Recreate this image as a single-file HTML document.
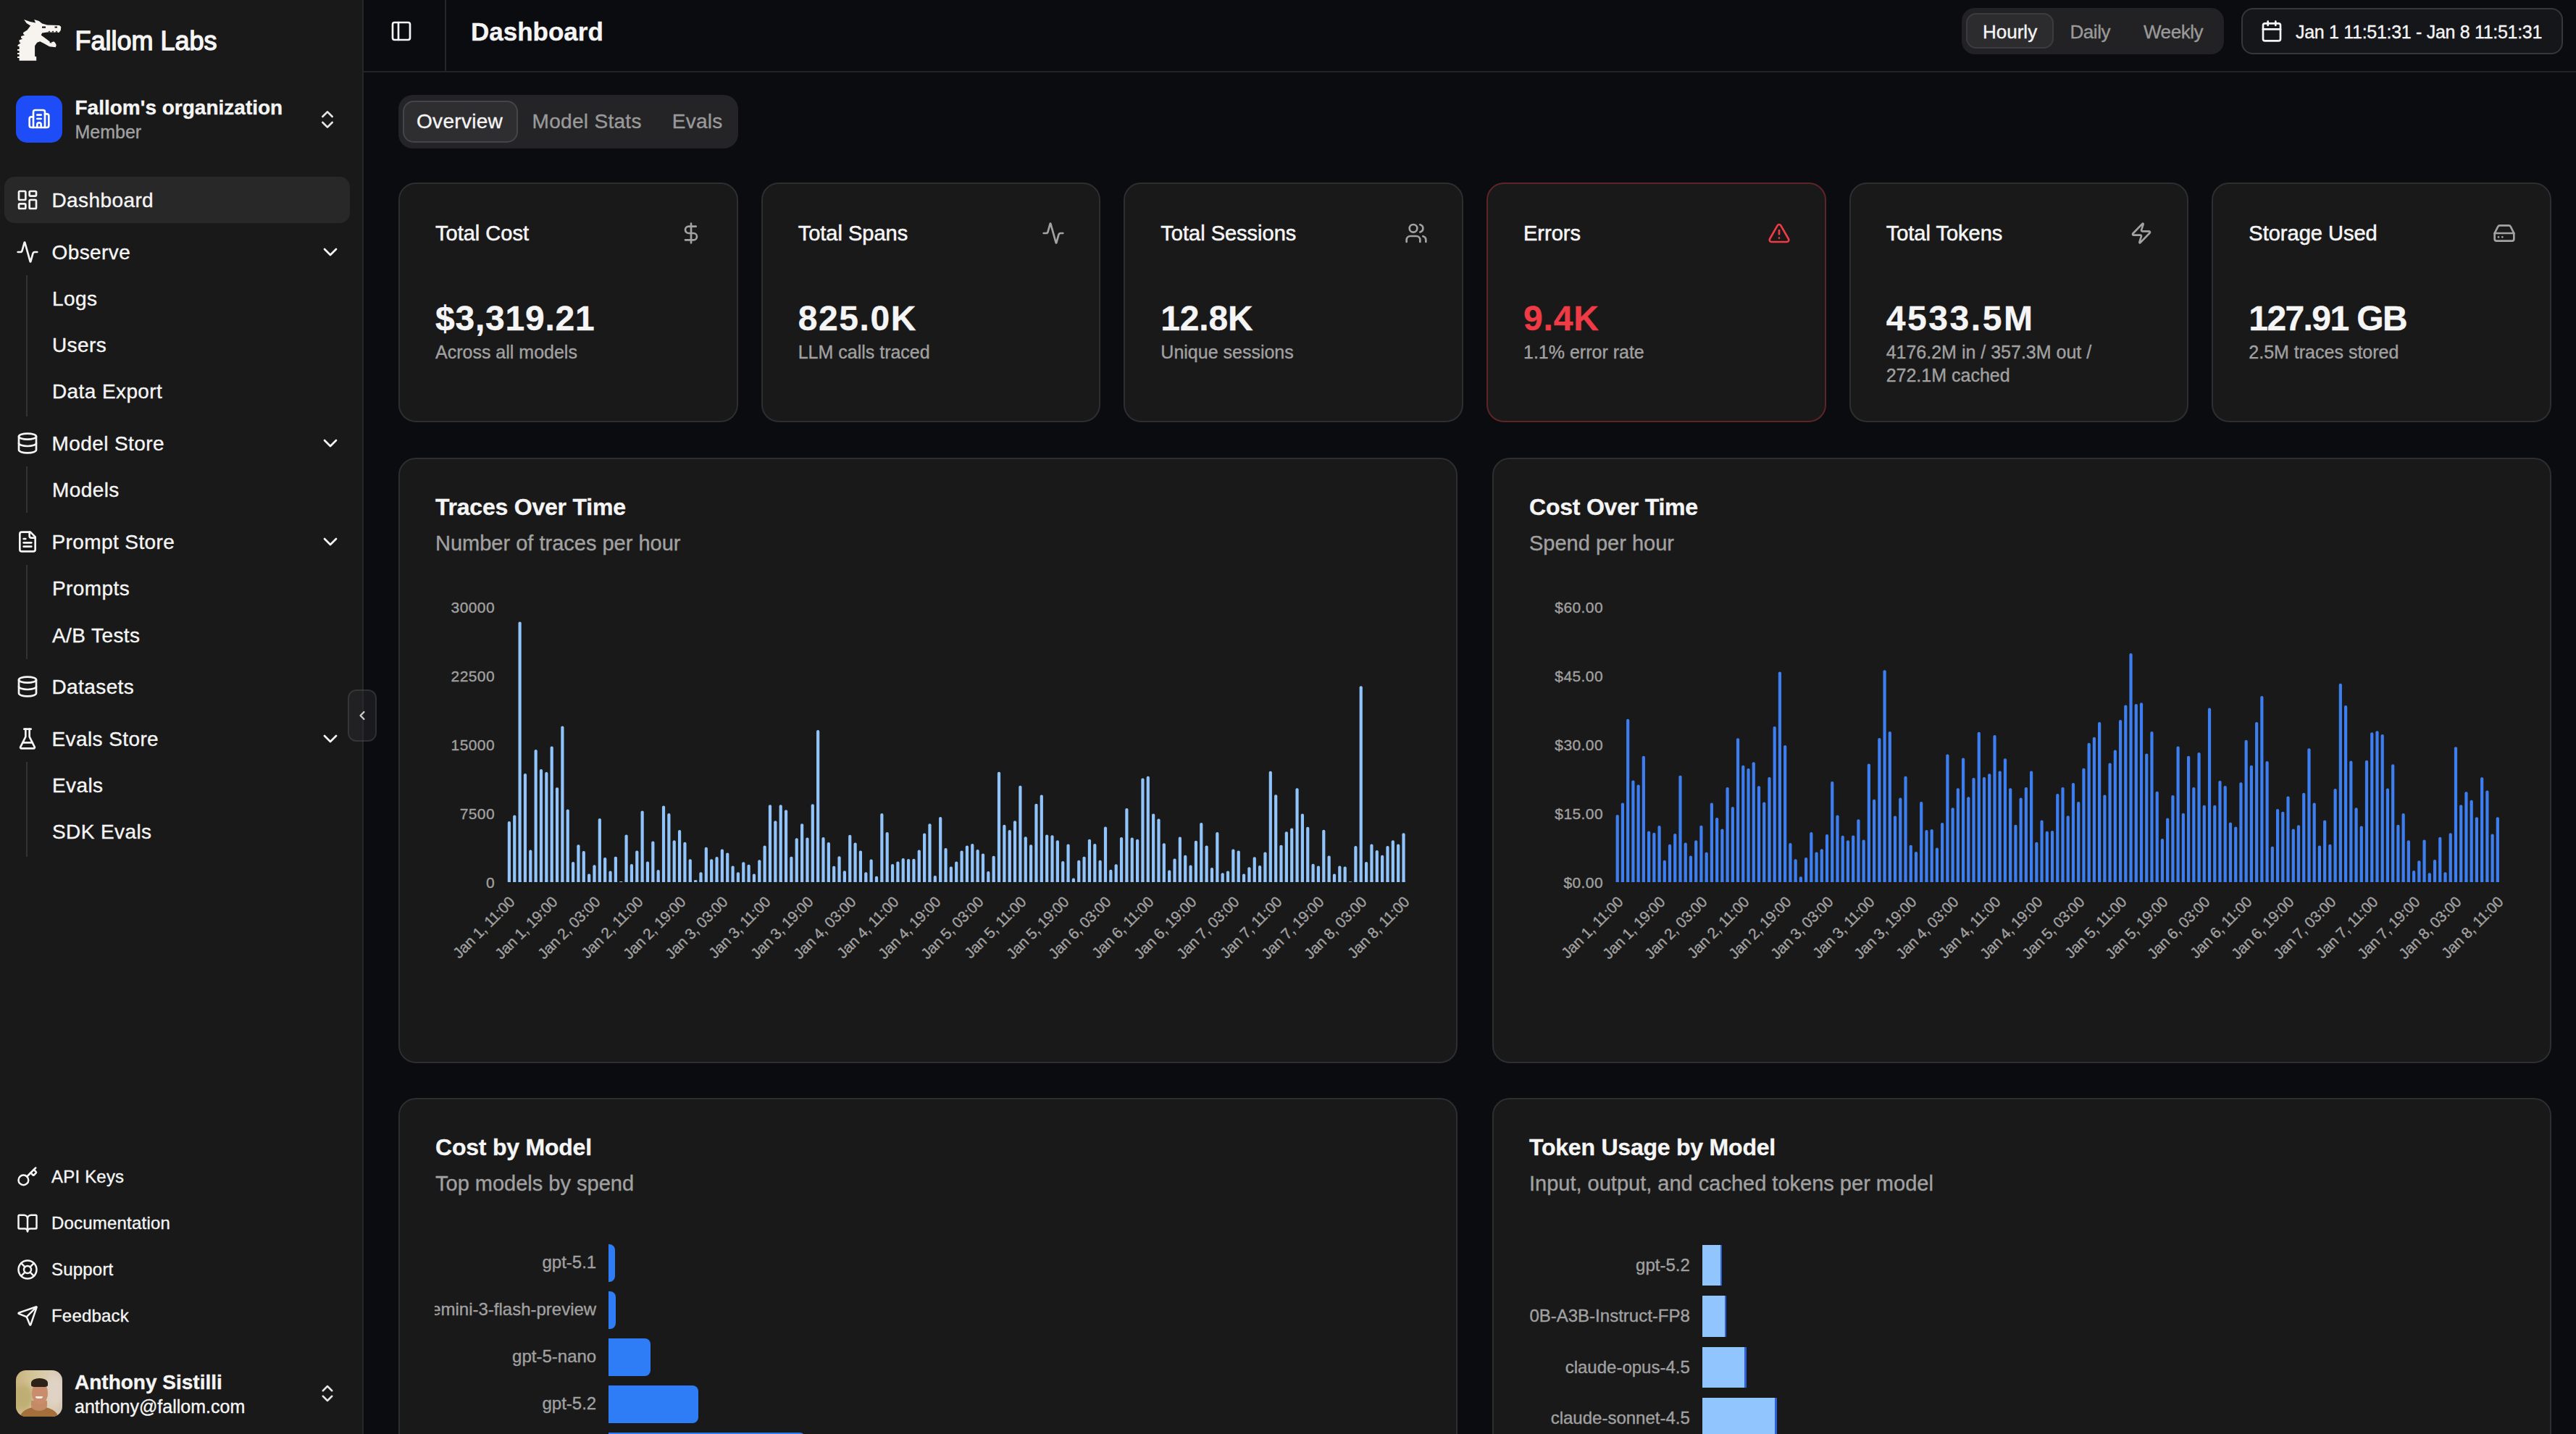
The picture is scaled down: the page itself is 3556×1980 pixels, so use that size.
<!DOCTYPE html><html><head><meta charset="utf-8"><style>
html,body{margin:0;padding:0;}
body{width:3556px;height:1980px;overflow:hidden;position:relative;background:#0b0c10;font-family:"Liberation Sans", sans-serif;}
.t{position:absolute;white-space:nowrap;line-height:1;-webkit-text-stroke-width:0.35px;}
.m{-webkit-text-stroke-width:0.55px;}
</style></head><body>
<div style="position:absolute;left:0px;top:0px;width:500px;height:1980px;background:#191919;"></div>
<div style="position:absolute;left:500px;top:0px;width:2px;height:1980px;background:#272727;"></div>
<svg style="position:absolute;left:0;top:0" width="100" height="100" viewBox="0 0 100 100"><path fill="#f7f3ee" d="M26.6 83.8 L50.2 83.8 L50.2 78.3 L48.1 77.8 L48.1 63.2 L51.2 58.7 L55.2 57.2 L60.2 59.7 L68.2 64.2 L76.8 65.2 L77.8 62.2 L76.3 59.2 L74.3 57.2 L70.2 58.7 L65.2 54.7 L56.7 48.6 L58.2 45.6 L65.2 44.6 L81.3 45.1 L83.8 42.1 L84.3 37.1 L81.8 35.1 L65.2 34.6 L58.2 32.6 L53.7 29.0 L47.1 27.0 L49.2 31.6 L41.6 30.0 L33.1 27.0 L36.6 32.1 L42.1 35.6 L37.6 41.6 L32.1 45.1 L32.1 47.1 L34.1 48.6 L29.1 50.1 L29.1 52.6 L31.1 53.7 L26.6 55.2 L26.6 58.2 L28.6 59.2 L24.5 62.2 L24.5 64 L26.6 64 L26.6 68 L24 68 L24 70 L26.6 70 L26.6 73 L24 73 L24 75 L26.6 75 L26.6 78 L24 78 L24 80 L26.6 80 Z"/>
<path fill="#191919" d="M58 36.6 L63 36.6 L63 38.8 L58 38.8 Z M75.5 36.5 L79 36.5 L79 38.6 L75.5 38.6 Z M66 44.6 L68 42.5 L70 44.6 Z M71 44.6 L73 42.5 L75 44.6 Z M76 44.8 L78 42.6 L80 44.8 Z M68 59 L70 57.5 L71.5 59.5Z"/></svg>
<div class="t " style="left:103.5px;top:38.53px;font-size:36px;color:#f5f5f5;font-weight:400;letter-spacing:0px;-webkit-text-stroke-width:1.3px;">Fallom Labs</div>
<div style="position:absolute;left:22px;top:132px;width:64px;height:65px;background:#1e4cf6;border-radius:15px;"></div>
<svg style="position:absolute;left:38.00px;top:147.50px" width="32" height="32" viewBox="0 0 24 24" fill="none" stroke="#ffffff" stroke-width="2" stroke-linecap="round" stroke-linejoin="round"><path d="M10 12h4"/><path d="M10 8h4"/><path d="M14 21v-3a2 2 0 0 0-4 0v3"/><path d="M6 10H4a2 2 0 0 0-2 2v7a2 2 0 0 0 2 2h16a2 2 0 0 0 2-2V9a2 2 0 0 0-2-2h-2"/><path d="M6 21V5a2 2 0 0 1 2-2h8a2 2 0 0 1 2 2v16"/></svg>
<div class="t " style="left:103.5px;top:135.30px;font-size:28px;color:#f5f5f5;font-weight:700;letter-spacing:0px;">Fallom's organization</div>
<div class="t " style="left:103.5px;top:169.64px;font-size:25px;color:#a1a1a1;font-weight:400;letter-spacing:0px;">Member</div>
<svg style="position:absolute;left:435.50px;top:148.50px" width="32" height="32" viewBox="0 0 24 24" fill="none" stroke="#e5e5e5" stroke-width="2" stroke-linecap="round" stroke-linejoin="round"><path d="m7 15 5 5 5-5"/><path d="m7 9 5-5 5 5"/></svg>
<div style="position:absolute;left:6px;top:244px;width:477px;height:64px;background:#282828;border-radius:14px;"></div>
<svg style="position:absolute;left:22.00px;top:260.00px" width="32" height="32" viewBox="0 0 24 24" fill="none" stroke="#f5f5f5" stroke-width="2" stroke-linecap="round" stroke-linejoin="round"><rect width="7" height="9" x="3" y="3" rx="1"/><rect width="7" height="5" x="14" y="3" rx="1"/><rect width="7" height="9" x="14" y="12" rx="1"/><rect width="7" height="5" x="3" y="16" rx="1"/></svg>
<div class="t " style="left:71.5px;top:262.50px;font-size:28px;color:#f5f5f5;font-weight:400;letter-spacing:0.4px;">Dashboard</div>
<svg style="position:absolute;left:22.00px;top:332.00px" width="32" height="32" viewBox="0 0 24 24" fill="none" stroke="#f5f5f5" stroke-width="2" stroke-linecap="round" stroke-linejoin="round"><path d="M22 12h-2.48a2 2 0 0 0-1.93 1.46l-2.35 8.36a.25.25 0 0 1-.48 0L9.24 2.18a.25.25 0 0 0-.48 0l-2.35 8.36A2 2 0 0 1 4.49 12H2"/></svg>
<div class="t " style="left:71.5px;top:334.50px;font-size:28px;color:#f5f5f5;font-weight:400;letter-spacing:0.4px;">Observe</div>
<svg style="position:absolute;left:440.00px;top:332.00px" width="32" height="32" viewBox="0 0 24 24" fill="none" stroke="#f5f5f5" stroke-width="2" stroke-linecap="round" stroke-linejoin="round"><path d="m6 9 6 6 6-6"/></svg>
<div class="t " style="left:72px;top:398.50px;font-size:28px;color:#f5f5f5;font-weight:400;letter-spacing:0.4px;">Logs</div>
<div class="t " style="left:72px;top:462.50px;font-size:28px;color:#f5f5f5;font-weight:400;letter-spacing:0.4px;">Users</div>
<div class="t " style="left:72px;top:526.50px;font-size:28px;color:#f5f5f5;font-weight:400;letter-spacing:0.4px;">Data Export</div>
<div style="position:absolute;left:36px;top:380px;width:2px;height:195px;background:#333335;"></div>
<svg style="position:absolute;left:22.00px;top:596.00px" width="32" height="32" viewBox="0 0 24 24" fill="none" stroke="#f5f5f5" stroke-width="2" stroke-linecap="round" stroke-linejoin="round"><ellipse cx="12" cy="5" rx="9" ry="3"/><path d="M3 5V19A9 3 0 0 0 21 19V5"/><path d="M3 12A9 3 0 0 0 21 12"/></svg>
<div class="t " style="left:71.5px;top:598.50px;font-size:28px;color:#f5f5f5;font-weight:400;letter-spacing:0.4px;">Model Store</div>
<svg style="position:absolute;left:440.00px;top:596.00px" width="32" height="32" viewBox="0 0 24 24" fill="none" stroke="#f5f5f5" stroke-width="2" stroke-linecap="round" stroke-linejoin="round"><path d="m6 9 6 6 6-6"/></svg>
<div class="t " style="left:72px;top:662.50px;font-size:28px;color:#f5f5f5;font-weight:400;letter-spacing:0.4px;">Models</div>
<div style="position:absolute;left:36px;top:644px;width:2px;height:64px;background:#333335;"></div>
<svg style="position:absolute;left:22.00px;top:732.00px" width="32" height="32" viewBox="0 0 24 24" fill="none" stroke="#f5f5f5" stroke-width="2" stroke-linecap="round" stroke-linejoin="round"><path d="M15 2H6a2 2 0 0 0-2 2v16a2 2 0 0 0 2 2h12a2 2 0 0 0 2-2V7Z"/><path d="M14 2v4a2 2 0 0 0 2 2h4"/><path d="M10 9H8"/><path d="M16 13H8"/><path d="M16 17H8"/></svg>
<div class="t " style="left:71.5px;top:734.50px;font-size:28px;color:#f5f5f5;font-weight:400;letter-spacing:0.4px;">Prompt Store</div>
<svg style="position:absolute;left:440.00px;top:732.00px" width="32" height="32" viewBox="0 0 24 24" fill="none" stroke="#f5f5f5" stroke-width="2" stroke-linecap="round" stroke-linejoin="round"><path d="m6 9 6 6 6-6"/></svg>
<div class="t " style="left:72px;top:798.50px;font-size:28px;color:#f5f5f5;font-weight:400;letter-spacing:0.4px;">Prompts</div>
<div class="t " style="left:72px;top:863.50px;font-size:28px;color:#f5f5f5;font-weight:400;letter-spacing:0.4px;">A/B Tests</div>
<div style="position:absolute;left:36px;top:780px;width:2px;height:130px;background:#333335;"></div>
<svg style="position:absolute;left:22.00px;top:932.00px" width="32" height="32" viewBox="0 0 24 24" fill="none" stroke="#f5f5f5" stroke-width="2" stroke-linecap="round" stroke-linejoin="round"><ellipse cx="12" cy="5" rx="9" ry="3"/><path d="M3 5V19A9 3 0 0 0 21 19V5"/><path d="M3 12A9 3 0 0 0 21 12"/></svg>
<div class="t " style="left:71.5px;top:934.50px;font-size:28px;color:#f5f5f5;font-weight:400;letter-spacing:0.4px;">Datasets</div>
<svg style="position:absolute;left:22.00px;top:1004.00px" width="32" height="32" viewBox="0 0 24 24" fill="none" stroke="#f5f5f5" stroke-width="2" stroke-linecap="round" stroke-linejoin="round"><path d="M10 2v7.527a2 2 0 0 1-.211.896L4.72 20.55a1 1 0 0 0 .9 1.45h12.76a1 1 0 0 0 .9-1.45l-5.069-10.127A2 2 0 0 1 14 9.527V2"/><path d="M8.5 2h7"/><path d="M7 16h10"/></svg>
<div class="t " style="left:71.5px;top:1006.50px;font-size:28px;color:#f5f5f5;font-weight:400;letter-spacing:0.4px;">Evals Store</div>
<svg style="position:absolute;left:440.00px;top:1004.00px" width="32" height="32" viewBox="0 0 24 24" fill="none" stroke="#f5f5f5" stroke-width="2" stroke-linecap="round" stroke-linejoin="round"><path d="m6 9 6 6 6-6"/></svg>
<div class="t " style="left:72px;top:1070.50px;font-size:28px;color:#f5f5f5;font-weight:400;letter-spacing:0.4px;">Evals</div>
<div class="t " style="left:72px;top:1134.50px;font-size:28px;color:#f5f5f5;font-weight:400;letter-spacing:0.4px;">SDK Evals</div>
<div style="position:absolute;left:36px;top:1052px;width:2px;height:131px;background:#333335;"></div>
<div style="position:absolute;left:480px;top:952px;width:40px;height:72px;background:rgba(44,44,48,0.45);border:2px solid rgba(255,255,255,0.09);border-radius:12px;box-sizing:border-box;"></div>
<svg style="position:absolute;left:490.00px;top:978.00px" width="20" height="20" viewBox="0 0 24 24" fill="none" stroke="#d0d0d0" stroke-width="2.6" stroke-linecap="round" stroke-linejoin="round"><path d="m15 18-6-6 6-6"/></svg>
<svg style="position:absolute;left:23.00px;top:1609.50px" width="30" height="30" viewBox="0 0 24 24" fill="none" stroke="#f5f5f5" stroke-width="2" stroke-linecap="round" stroke-linejoin="round"><path d="m15.5 7.5 2.3 2.3a1 1 0 0 0 1.4 0l2.1-2.1a1 1 0 0 0 0-1.4L19 4"/><path d="m21 2-9.6 9.6"/><circle cx="7.5" cy="15.5" r="5.5"/></svg>
<div class="t " style="left:71px;top:1612.78px;font-size:24px;color:#f5f5f5;font-weight:400;letter-spacing:0.2px;">API Keys</div>
<svg style="position:absolute;left:23.00px;top:1673.50px" width="30" height="30" viewBox="0 0 24 24" fill="none" stroke="#f5f5f5" stroke-width="2" stroke-linecap="round" stroke-linejoin="round"><path d="M12 7v14"/><path d="M3 18a1 1 0 0 1-1-1V4a1 1 0 0 1 1-1h5a4 4 0 0 1 4 4 4 4 0 0 1 4-4h5a1 1 0 0 1 1 1v13a1 1 0 0 1-1 1h-6a3 3 0 0 0-3 3 3 3 0 0 0-3-3z"/></svg>
<div class="t " style="left:71px;top:1676.78px;font-size:24px;color:#f5f5f5;font-weight:400;letter-spacing:0.2px;">Documentation</div>
<svg style="position:absolute;left:23.00px;top:1737.50px" width="30" height="30" viewBox="0 0 24 24" fill="none" stroke="#f5f5f5" stroke-width="2" stroke-linecap="round" stroke-linejoin="round"><circle cx="12" cy="12" r="10"/><path d="m4.93 4.93 4.24 4.24"/><path d="m14.83 9.17 4.24-4.24"/><path d="m14.83 14.83 4.24 4.24"/><path d="m9.17 14.83-4.24 4.24"/><circle cx="12" cy="12" r="4"/></svg>
<div class="t " style="left:71px;top:1740.78px;font-size:24px;color:#f5f5f5;font-weight:400;letter-spacing:0.2px;">Support</div>
<svg style="position:absolute;left:23.00px;top:1801.50px" width="30" height="30" viewBox="0 0 24 24" fill="none" stroke="#f5f5f5" stroke-width="2" stroke-linecap="round" stroke-linejoin="round"><path d="M14.536 21.686a.5.5 0 0 0 .937-.024l6.5-19a.496.496 0 0 0-.635-.635l-19 6.5a.5.5 0 0 0-.024.937l7.93 3.18a2 2 0 0 1 1.112 1.11z"/><path d="m21.854 2.147-10.94 10.939"/></svg>
<div class="t " style="left:71px;top:1804.78px;font-size:24px;color:#f5f5f5;font-weight:400;letter-spacing:0.2px;">Feedback</div>
<div style="position:absolute;left:22px;top:1892px;width:64px;height:64px;border-radius:14px;overflow:hidden;background:linear-gradient(90deg,#c9b27e 0%,#d2c293 30%,#d8cba6 55%,#dccdb6 75%,#d6c6b2 100%);">
<div style="position:absolute;left:-6px;top:20px;width:30px;height:34px;border-radius:50%;background:#bfae74;filter:blur(3px);"></div>
<div style="position:absolute;left:40px;top:6px;width:26px;height:44px;border-radius:50%;background:#e0d2c4;filter:blur(3px);"></div>
<div style="position:absolute;left:6px;top:50px;width:52px;height:30px;border-radius:50% 50% 0 0;background:#a46f3a;"></div>
<div style="position:absolute;left:21px;top:42px;width:22px;height:14px;border-radius:0 0 50% 50%;background:#c48a66;"></div>
<div style="position:absolute;left:22px;top:16px;width:22px;height:31px;border-radius:50%;background:#c98d6d;"></div>
<div style="position:absolute;left:21px;top:11px;width:23px;height:12px;border-radius:50% 50% 20% 20%;background:#2e211a;"></div>
<div style="position:absolute;left:27px;top:36px;width:10px;height:3px;border-radius:0 0 5px 5px;background:#f2ece4;"></div>
</div>
<div class="t " style="left:103px;top:1895.30px;font-size:28px;color:#f5f5f5;font-weight:700;letter-spacing:0px;">Anthony Sistilli</div>
<div class="t " style="left:103px;top:1929.84px;font-size:25px;color:#f5f5f5;font-weight:400;letter-spacing:0px;">anthony@fallom.com</div>
<svg style="position:absolute;left:437.00px;top:1908.50px" width="30" height="30" viewBox="0 0 24 24" fill="none" stroke="#e5e5e5" stroke-width="2" stroke-linecap="round" stroke-linejoin="round"><path d="m7 15 5 5 5-5"/><path d="m7 9 5-5 5 5"/></svg>
<div style="position:absolute;left:502px;top:98px;width:3054px;height:2px;background:#222327;"></div>
<div style="position:absolute;left:614px;top:0px;width:2px;height:98px;background:#26272b;"></div>
<svg style="position:absolute;left:538.00px;top:27.00px" width="32" height="32" viewBox="0 0 24 24" fill="none" stroke="#f5f5f5" stroke-width="2" stroke-linecap="round" stroke-linejoin="round"><rect width="18" height="18" x="3" y="3" rx="2"/><path d="M9 3v18"/></svg>
<div class="t " style="left:650px;top:25.77px;font-size:35px;color:#f5f5f5;font-weight:700;letter-spacing:0px;">Dashboard</div>
<div style="position:absolute;left:2708px;top:11px;width:362px;height:64px;background:#222224;border-radius:18px;"></div>
<div style="position:absolute;left:2714px;top:18px;width:121px;height:49px;background:#2c2c2e;border:2px solid #3c3c3e;border-radius:14px;box-sizing:border-box;"></div>
<div class="t " style="left:2737px;top:30.79px;font-size:26px;color:#f5f5f5;font-weight:400;letter-spacing:0px;">Hourly</div>
<div class="t " style="left:2857.5px;top:30.79px;font-size:26px;color:#9a9a9a;font-weight:400;letter-spacing:-0.45px;">Daily</div>
<div class="t " style="left:2959px;top:30.79px;font-size:26px;color:#9a9a9a;font-weight:400;letter-spacing:-0.45px;">Weekly</div>
<div style="position:absolute;left:3094px;top:11px;width:444px;height:64px;background:#15161a;border:2px solid #36373b;border-radius:16px;box-sizing:border-box;"></div>
<svg style="position:absolute;left:3120.00px;top:27.00px" width="32" height="32" viewBox="0 0 24 24" fill="none" stroke="#f5f5f5" stroke-width="2" stroke-linecap="round" stroke-linejoin="round"><path d="M8 2v4"/><path d="M16 2v4"/><rect width="18" height="18" x="3" y="4" rx="2"/><path d="M3 10h18"/></svg>
<div class="t " style="left:3169px;top:31.64px;font-size:25px;color:#f5f5f5;font-weight:400;letter-spacing:-0.3px;">Jan 1 11:51:31 - Jan 8 11:51:31</div>
<div style="position:absolute;left:550px;top:131px;width:469px;height:74px;background:#242426;border-radius:20px;"></div>
<div style="position:absolute;left:556px;top:139px;width:159px;height:58px;background:#2e2e30;border:2px solid #454547;border-radius:15px;box-sizing:border-box;"></div>
<div class="t " style="left:575px;top:154.30px;font-size:28px;color:#f5f5f5;font-weight:400;letter-spacing:0.3px;">Overview</div>
<div class="t " style="left:734.6px;top:154.30px;font-size:28px;color:#9a9a9a;font-weight:400;letter-spacing:0.3px;">Model Stats</div>
<div class="t " style="left:927.7px;top:154.30px;font-size:28px;color:#9a9a9a;font-weight:400;letter-spacing:0.3px;">Evals</div>
<div style="position:absolute;left:550.0px;top:252px;width:468.67px;height:331px;background:#19191a;border:2px solid #2e2e31;border-radius:24px;box-sizing:border-box;"></div>
<div class="t m" style="left:601.0px;top:308.45px;font-size:29px;color:#f5f5f5;font-weight:400;letter-spacing:0px;">Total Cost</div>
<svg style="position:absolute;left:937.67px;top:306.00px" width="32" height="32" viewBox="0 0 24 24" fill="none" stroke="#a3a3a3" stroke-width="2" stroke-linecap="round" stroke-linejoin="round"><line x1="12" x2="12" y1="2" y2="22"/><path d="M17 5H9.5a3.5 3.5 0 0 0 0 7h5a3.5 3.5 0 0 1 0 7H6"/></svg>
<div class="t " style="left:601.0px;top:415.97px;font-size:48px;color:#f5f5f5;font-weight:700;letter-spacing:0.77px;">$3,319.21</div>
<div class="t " style="left:601.0px;top:474.24px;font-size:25px;color:#a1a1a1;font-weight:400;letter-spacing:0px;">Across all models</div>
<div style="position:absolute;left:1050.67px;top:252px;width:468.67px;height:331px;background:#19191a;border:2px solid #2e2e31;border-radius:24px;box-sizing:border-box;"></div>
<div class="t m" style="left:1101.67px;top:308.45px;font-size:29px;color:#f5f5f5;font-weight:400;letter-spacing:0px;">Total Spans</div>
<svg style="position:absolute;left:1438.33px;top:306.00px" width="32" height="32" viewBox="0 0 24 24" fill="none" stroke="#a3a3a3" stroke-width="2" stroke-linecap="round" stroke-linejoin="round"><path d="M22 12h-2.48a2 2 0 0 0-1.93 1.46l-2.35 8.36a.25.25 0 0 1-.48 0L9.24 2.18a.25.25 0 0 0-.48 0l-2.35 8.36A2 2 0 0 1 4.49 12H2"/></svg>
<div class="t " style="left:1101.67px;top:415.97px;font-size:48px;color:#f5f5f5;font-weight:700;letter-spacing:1.6px;">825.0K</div>
<div class="t " style="left:1101.67px;top:474.24px;font-size:25px;color:#a1a1a1;font-weight:400;letter-spacing:0px;">LLM calls traced</div>
<div style="position:absolute;left:1551.33px;top:252px;width:468.67px;height:331px;background:#19191a;border:2px solid #2e2e31;border-radius:24px;box-sizing:border-box;"></div>
<div class="t m" style="left:1602.33px;top:308.45px;font-size:29px;color:#f5f5f5;font-weight:400;letter-spacing:0px;">Total Sessions</div>
<svg style="position:absolute;left:1939.00px;top:306.00px" width="32" height="32" viewBox="0 0 24 24" fill="none" stroke="#a3a3a3" stroke-width="2" stroke-linecap="round" stroke-linejoin="round"><path d="M16 21v-2a4 4 0 0 0-4-4H6a4 4 0 0 0-4 4v2"/><circle cx="9" cy="7" r="4"/><path d="M22 21v-2a4 4 0 0 0-3-3.87"/><path d="M16 3.13a4 4 0 0 1 0 7.75"/></svg>
<div class="t " style="left:1602.33px;top:415.97px;font-size:48px;color:#f5f5f5;font-weight:700;letter-spacing:-0.2px;">12.8K</div>
<div class="t " style="left:1602.33px;top:474.24px;font-size:25px;color:#a1a1a1;font-weight:400;letter-spacing:0px;">Unique sessions</div>
<div style="position:absolute;left:2052.0px;top:252px;width:468.67px;height:331px;background:#19191a;border:2px solid #5f2428;border-radius:24px;box-sizing:border-box;"></div>
<div class="t m" style="left:2103.0px;top:308.45px;font-size:29px;color:#f5f5f5;font-weight:400;letter-spacing:0px;">Errors</div>
<svg style="position:absolute;left:2439.67px;top:306.00px" width="32" height="32" viewBox="0 0 24 24" fill="none" stroke="#ef3b45" stroke-width="2" stroke-linecap="round" stroke-linejoin="round"><path d="m21.73 18-8-14a2 2 0 0 0-3.48 0l-8 14A2 2 0 0 0 4 21h16a2 2 0 0 0 1.73-3"/><path d="M12 9v4"/><path d="M12 17h.01"/></svg>
<div class="t " style="left:2103.0px;top:415.97px;font-size:48px;color:#ef3b45;font-weight:700;letter-spacing:0.8px;">9.4K</div>
<div class="t " style="left:2103.0px;top:474.24px;font-size:25px;color:#a1a1a1;font-weight:400;letter-spacing:0px;">1.1% error rate</div>
<div style="position:absolute;left:2552.67px;top:252px;width:468.67px;height:331px;background:#19191a;border:2px solid #2e2e31;border-radius:24px;box-sizing:border-box;"></div>
<div class="t m" style="left:2603.67px;top:308.45px;font-size:29px;color:#f5f5f5;font-weight:400;letter-spacing:0px;">Total Tokens</div>
<svg style="position:absolute;left:2940.33px;top:306.00px" width="32" height="32" viewBox="0 0 24 24" fill="none" stroke="#a3a3a3" stroke-width="2" stroke-linecap="round" stroke-linejoin="round"><path d="M4 14a1 1 0 0 1-.78-1.63l9.9-10.2a.5.5 0 0 1 .86.46l-1.92 6.02A1 1 0 0 0 13 10h7a1 1 0 0 1 .78 1.63l-9.9 10.2a.5.5 0 0 1-.86-.46l1.92-6.02A1 1 0 0 0 11 14z"/></svg>
<div class="t " style="left:2603.67px;top:415.97px;font-size:48px;color:#f5f5f5;font-weight:700;letter-spacing:2.6px;">4533.5M</div>
<div class="t " style="left:2603.67px;top:474.24px;font-size:25px;color:#a1a1a1;font-weight:400;letter-spacing:0px;">4176.2M in / 357.3M out /</div>
<div class="t " style="left:2603.67px;top:506.24px;font-size:25px;color:#a1a1a1;font-weight:400;letter-spacing:0px;">272.1M cached</div>
<div style="position:absolute;left:3053.33px;top:252px;width:468.67px;height:331px;background:#19191a;border:2px solid #2e2e31;border-radius:24px;box-sizing:border-box;"></div>
<div class="t m" style="left:3104.33px;top:308.45px;font-size:29px;color:#f5f5f5;font-weight:400;letter-spacing:0px;">Storage Used</div>
<svg style="position:absolute;left:3441.00px;top:306.00px" width="32" height="32" viewBox="0 0 24 24" fill="none" stroke="#a3a3a3" stroke-width="2" stroke-linecap="round" stroke-linejoin="round"><line x1="22" x2="2" y1="12" y2="12"/><path d="M5.45 5.11 2 12v6a2 2 0 0 0 2 2h16a2 2 0 0 0 2-2v-6l-3.45-6.89A2 2 0 0 0 16.76 4H7.24a2 2 0 0 0-1.79 1.11z"/><line x1="6" x2="6.01" y1="16" y2="16"/><line x1="10" x2="10.01" y1="16" y2="16"/></svg>
<div class="t " style="left:3104.33px;top:415.97px;font-size:48px;color:#f5f5f5;font-weight:700;letter-spacing:-1.6px;">127.91 GB</div>
<div class="t " style="left:3104.33px;top:474.24px;font-size:25px;color:#a1a1a1;font-weight:400;letter-spacing:0px;">2.5M traces stored</div>
<div style="position:absolute;left:550px;top:632px;width:1462px;height:836px;background:#19191a;border:2px solid #2e2e31;border-radius:24px;box-sizing:border-box;"></div>
<div class="t " style="left:601px;top:683.91px;font-size:32px;color:#f5f5f5;font-weight:700;letter-spacing:-0.22px;">Traces Over Time</div>
<div class="t " style="left:601px;top:736.45px;font-size:29px;color:#a1a1a1;font-weight:400;letter-spacing:0px;">Number of traces per hour</div>
<div style="position:absolute;left:2060px;top:632px;width:1462px;height:836px;background:#19191a;border:2px solid #2e2e31;border-radius:24px;box-sizing:border-box;"></div>
<div class="t " style="left:2111px;top:683.91px;font-size:32px;color:#f5f5f5;font-weight:700;letter-spacing:-0.22px;">Cost Over Time</div>
<div class="t " style="left:2111px;top:736.45px;font-size:29px;color:#a1a1a1;font-weight:400;letter-spacing:0px;">Spend per hour</div>
<svg style="position:absolute;left:0;top:0" width="3556" height="1980" viewBox="0 0 3556 1980"><rect x="700.80" y="1134.00" width="4.2" height="84.00" rx="2.00" fill="#90c4fb"/><rect x="700.80" y="1215.50" width="4.2" height="2.50" fill="#90c4fb"/><rect x="708.15" y="1125.50" width="4.2" height="92.50" rx="2.00" fill="#90c4fb"/><rect x="708.15" y="1215.50" width="4.2" height="2.50" fill="#90c4fb"/><rect x="715.50" y="858.40" width="4.2" height="359.60" rx="2.00" fill="#90c4fb"/><rect x="715.50" y="1215.50" width="4.2" height="2.50" fill="#90c4fb"/><rect x="722.85" y="1068.00" width="4.2" height="150.00" rx="2.00" fill="#90c4fb"/><rect x="722.85" y="1215.50" width="4.2" height="2.50" fill="#90c4fb"/><rect x="730.20" y="1173.40" width="4.2" height="44.60" rx="2.00" fill="#90c4fb"/><rect x="730.20" y="1215.50" width="4.2" height="2.50" fill="#90c4fb"/><rect x="737.54" y="1035.00" width="4.2" height="183.00" rx="2.00" fill="#90c4fb"/><rect x="737.54" y="1215.50" width="4.2" height="2.50" fill="#90c4fb"/><rect x="744.89" y="1062.00" width="4.2" height="156.00" rx="2.00" fill="#90c4fb"/><rect x="744.89" y="1215.50" width="4.2" height="2.50" fill="#90c4fb"/><rect x="752.24" y="1066.00" width="4.2" height="152.00" rx="2.00" fill="#90c4fb"/><rect x="752.24" y="1215.50" width="4.2" height="2.50" fill="#90c4fb"/><rect x="759.59" y="1030.50" width="4.2" height="187.50" rx="2.00" fill="#90c4fb"/><rect x="759.59" y="1215.50" width="4.2" height="2.50" fill="#90c4fb"/><rect x="766.94" y="1087.20" width="4.2" height="130.80" rx="2.00" fill="#90c4fb"/><rect x="766.94" y="1215.50" width="4.2" height="2.50" fill="#90c4fb"/><rect x="774.29" y="1002.40" width="4.2" height="215.60" rx="2.00" fill="#90c4fb"/><rect x="774.29" y="1215.50" width="4.2" height="2.50" fill="#90c4fb"/><rect x="781.64" y="1117.50" width="4.2" height="100.50" rx="2.00" fill="#90c4fb"/><rect x="781.64" y="1215.50" width="4.2" height="2.50" fill="#90c4fb"/><rect x="788.99" y="1190.00" width="4.2" height="28.00" rx="2.00" fill="#90c4fb"/><rect x="788.99" y="1215.50" width="4.2" height="2.50" fill="#90c4fb"/><rect x="796.34" y="1166.20" width="4.2" height="51.80" rx="2.00" fill="#90c4fb"/><rect x="796.34" y="1215.50" width="4.2" height="2.50" fill="#90c4fb"/><rect x="803.69" y="1175.00" width="4.2" height="43.00" rx="2.00" fill="#90c4fb"/><rect x="803.69" y="1215.50" width="4.2" height="2.50" fill="#90c4fb"/><rect x="811.03" y="1206.40" width="4.2" height="11.60" rx="2.00" fill="#90c4fb"/><rect x="811.03" y="1215.50" width="4.2" height="2.50" fill="#90c4fb"/><rect x="818.38" y="1194.30" width="4.2" height="23.70" rx="2.00" fill="#90c4fb"/><rect x="818.38" y="1215.50" width="4.2" height="2.50" fill="#90c4fb"/><rect x="825.73" y="1130.00" width="4.2" height="88.00" rx="2.00" fill="#90c4fb"/><rect x="825.73" y="1215.50" width="4.2" height="2.50" fill="#90c4fb"/><rect x="833.08" y="1184.10" width="4.2" height="33.90" rx="2.00" fill="#90c4fb"/><rect x="833.08" y="1215.50" width="4.2" height="2.50" fill="#90c4fb"/><rect x="840.43" y="1202.60" width="4.2" height="15.40" rx="2.00" fill="#90c4fb"/><rect x="840.43" y="1215.50" width="4.2" height="2.50" fill="#90c4fb"/><rect x="847.78" y="1182.80" width="4.2" height="35.20" rx="2.00" fill="#90c4fb"/><rect x="847.78" y="1215.50" width="4.2" height="2.50" fill="#90c4fb"/><rect x="855.13" y="1217.00" width="4.2" height="1.00" rx="0.50" fill="#90c4fb"/><rect x="862.48" y="1152.50" width="4.2" height="65.50" rx="2.00" fill="#90c4fb"/><rect x="862.48" y="1215.50" width="4.2" height="2.50" fill="#90c4fb"/><rect x="869.83" y="1193.00" width="4.2" height="25.00" rx="2.00" fill="#90c4fb"/><rect x="869.83" y="1215.50" width="4.2" height="2.50" fill="#90c4fb"/><rect x="877.18" y="1174.50" width="4.2" height="43.50" rx="2.00" fill="#90c4fb"/><rect x="877.18" y="1215.50" width="4.2" height="2.50" fill="#90c4fb"/><rect x="884.52" y="1119.40" width="4.2" height="98.60" rx="2.00" fill="#90c4fb"/><rect x="884.52" y="1215.50" width="4.2" height="2.50" fill="#90c4fb"/><rect x="891.87" y="1189.60" width="4.2" height="28.40" rx="2.00" fill="#90c4fb"/><rect x="891.87" y="1215.50" width="4.2" height="2.50" fill="#90c4fb"/><rect x="899.22" y="1161.60" width="4.2" height="56.40" rx="2.00" fill="#90c4fb"/><rect x="899.22" y="1215.50" width="4.2" height="2.50" fill="#90c4fb"/><rect x="906.57" y="1201.00" width="4.2" height="17.00" rx="2.00" fill="#90c4fb"/><rect x="906.57" y="1215.50" width="4.2" height="2.50" fill="#90c4fb"/><rect x="913.92" y="1112.50" width="4.2" height="105.50" rx="2.00" fill="#90c4fb"/><rect x="913.92" y="1215.50" width="4.2" height="2.50" fill="#90c4fb"/><rect x="921.27" y="1123.00" width="4.2" height="95.00" rx="2.00" fill="#90c4fb"/><rect x="921.27" y="1215.50" width="4.2" height="2.50" fill="#90c4fb"/><rect x="928.62" y="1160.20" width="4.2" height="57.80" rx="2.00" fill="#90c4fb"/><rect x="928.62" y="1215.50" width="4.2" height="2.50" fill="#90c4fb"/><rect x="935.97" y="1146.10" width="4.2" height="71.90" rx="2.00" fill="#90c4fb"/><rect x="935.97" y="1215.50" width="4.2" height="2.50" fill="#90c4fb"/><rect x="943.32" y="1162.70" width="4.2" height="55.30" rx="2.00" fill="#90c4fb"/><rect x="943.32" y="1215.50" width="4.2" height="2.50" fill="#90c4fb"/><rect x="950.67" y="1186.30" width="4.2" height="31.70" rx="2.00" fill="#90c4fb"/><rect x="950.67" y="1215.50" width="4.2" height="2.50" fill="#90c4fb"/><rect x="958.01" y="1215.20" width="4.2" height="2.80" rx="1.40" fill="#90c4fb"/><rect x="958.01" y="1215.50" width="4.2" height="2.50" fill="#90c4fb"/><rect x="965.36" y="1204.20" width="4.2" height="13.80" rx="2.00" fill="#90c4fb"/><rect x="965.36" y="1215.50" width="4.2" height="2.50" fill="#90c4fb"/><rect x="972.71" y="1169.80" width="4.2" height="48.20" rx="2.00" fill="#90c4fb"/><rect x="972.71" y="1215.50" width="4.2" height="2.50" fill="#90c4fb"/><rect x="980.06" y="1186.30" width="4.2" height="31.70" rx="2.00" fill="#90c4fb"/><rect x="980.06" y="1215.50" width="4.2" height="2.50" fill="#90c4fb"/><rect x="987.41" y="1183.00" width="4.2" height="35.00" rx="2.00" fill="#90c4fb"/><rect x="987.41" y="1215.50" width="4.2" height="2.50" fill="#90c4fb"/><rect x="994.76" y="1172.60" width="4.2" height="45.40" rx="2.00" fill="#90c4fb"/><rect x="994.76" y="1215.50" width="4.2" height="2.50" fill="#90c4fb"/><rect x="1002.11" y="1177.50" width="4.2" height="40.50" rx="2.00" fill="#90c4fb"/><rect x="1002.11" y="1215.50" width="4.2" height="2.50" fill="#90c4fb"/><rect x="1009.46" y="1195.40" width="4.2" height="22.60" rx="2.00" fill="#90c4fb"/><rect x="1009.46" y="1215.50" width="4.2" height="2.50" fill="#90c4fb"/><rect x="1016.81" y="1204.20" width="4.2" height="13.80" rx="2.00" fill="#90c4fb"/><rect x="1016.81" y="1215.50" width="4.2" height="2.50" fill="#90c4fb"/><rect x="1024.16" y="1190.20" width="4.2" height="27.80" rx="2.00" fill="#90c4fb"/><rect x="1024.16" y="1215.50" width="4.2" height="2.50" fill="#90c4fb"/><rect x="1031.51" y="1193.80" width="4.2" height="24.20" rx="2.00" fill="#90c4fb"/><rect x="1031.51" y="1215.50" width="4.2" height="2.50" fill="#90c4fb"/><rect x="1038.85" y="1206.40" width="4.2" height="11.60" rx="2.00" fill="#90c4fb"/><rect x="1038.85" y="1215.50" width="4.2" height="2.50" fill="#90c4fb"/><rect x="1046.20" y="1187.20" width="4.2" height="30.80" rx="2.00" fill="#90c4fb"/><rect x="1046.20" y="1215.50" width="4.2" height="2.50" fill="#90c4fb"/><rect x="1053.55" y="1167.60" width="4.2" height="50.40" rx="2.00" fill="#90c4fb"/><rect x="1053.55" y="1215.50" width="4.2" height="2.50" fill="#90c4fb"/><rect x="1060.90" y="1111.20" width="4.2" height="106.80" rx="2.00" fill="#90c4fb"/><rect x="1060.90" y="1215.50" width="4.2" height="2.50" fill="#90c4fb"/><rect x="1068.25" y="1133.20" width="4.2" height="84.80" rx="2.00" fill="#90c4fb"/><rect x="1068.25" y="1215.50" width="4.2" height="2.50" fill="#90c4fb"/><rect x="1075.60" y="1111.20" width="4.2" height="106.80" rx="2.00" fill="#90c4fb"/><rect x="1075.60" y="1215.50" width="4.2" height="2.50" fill="#90c4fb"/><rect x="1082.95" y="1118.30" width="4.2" height="99.70" rx="2.00" fill="#90c4fb"/><rect x="1082.95" y="1215.50" width="4.2" height="2.50" fill="#90c4fb"/><rect x="1090.30" y="1182.80" width="4.2" height="35.20" rx="2.00" fill="#90c4fb"/><rect x="1090.30" y="1215.50" width="4.2" height="2.50" fill="#90c4fb"/><rect x="1097.65" y="1157.20" width="4.2" height="60.80" rx="2.00" fill="#90c4fb"/><rect x="1097.65" y="1215.50" width="4.2" height="2.50" fill="#90c4fb"/><rect x="1105.00" y="1137.30" width="4.2" height="80.70" rx="2.00" fill="#90c4fb"/><rect x="1105.00" y="1215.50" width="4.2" height="2.50" fill="#90c4fb"/><rect x="1112.34" y="1156.60" width="4.2" height="61.40" rx="2.00" fill="#90c4fb"/><rect x="1112.34" y="1215.50" width="4.2" height="2.50" fill="#90c4fb"/><rect x="1119.69" y="1110.30" width="4.2" height="107.70" rx="2.00" fill="#90c4fb"/><rect x="1119.69" y="1215.50" width="4.2" height="2.50" fill="#90c4fb"/><rect x="1127.04" y="1008.00" width="4.2" height="210.00" rx="2.00" fill="#90c4fb"/><rect x="1127.04" y="1215.50" width="4.2" height="2.50" fill="#90c4fb"/><rect x="1134.39" y="1156.00" width="4.2" height="62.00" rx="2.00" fill="#90c4fb"/><rect x="1134.39" y="1215.50" width="4.2" height="2.50" fill="#90c4fb"/><rect x="1141.74" y="1163.00" width="4.2" height="55.00" rx="2.00" fill="#90c4fb"/><rect x="1141.74" y="1215.50" width="4.2" height="2.50" fill="#90c4fb"/><rect x="1149.09" y="1195.70" width="4.2" height="22.30" rx="2.00" fill="#90c4fb"/><rect x="1149.09" y="1215.50" width="4.2" height="2.50" fill="#90c4fb"/><rect x="1156.44" y="1182.20" width="4.2" height="35.80" rx="2.00" fill="#90c4fb"/><rect x="1156.44" y="1215.50" width="4.2" height="2.50" fill="#90c4fb"/><rect x="1163.79" y="1202.30" width="4.2" height="15.70" rx="2.00" fill="#90c4fb"/><rect x="1163.79" y="1215.50" width="4.2" height="2.50" fill="#90c4fb"/><rect x="1171.14" y="1152.70" width="4.2" height="65.30" rx="2.00" fill="#90c4fb"/><rect x="1171.14" y="1215.50" width="4.2" height="2.50" fill="#90c4fb"/><rect x="1178.49" y="1163.50" width="4.2" height="54.50" rx="2.00" fill="#90c4fb"/><rect x="1178.49" y="1215.50" width="4.2" height="2.50" fill="#90c4fb"/><rect x="1185.83" y="1174.50" width="4.2" height="43.50" rx="2.00" fill="#90c4fb"/><rect x="1185.83" y="1215.50" width="4.2" height="2.50" fill="#90c4fb"/><rect x="1193.18" y="1204.20" width="4.2" height="13.80" rx="2.00" fill="#90c4fb"/><rect x="1193.18" y="1215.50" width="4.2" height="2.50" fill="#90c4fb"/><rect x="1200.53" y="1186.60" width="4.2" height="31.40" rx="2.00" fill="#90c4fb"/><rect x="1200.53" y="1215.50" width="4.2" height="2.50" fill="#90c4fb"/><rect x="1207.88" y="1209.70" width="4.2" height="8.30" rx="2.00" fill="#90c4fb"/><rect x="1207.88" y="1215.50" width="4.2" height="2.50" fill="#90c4fb"/><rect x="1215.23" y="1123.00" width="4.2" height="95.00" rx="2.00" fill="#90c4fb"/><rect x="1215.23" y="1215.50" width="4.2" height="2.50" fill="#90c4fb"/><rect x="1222.58" y="1148.90" width="4.2" height="69.10" rx="2.00" fill="#90c4fb"/><rect x="1222.58" y="1215.50" width="4.2" height="2.50" fill="#90c4fb"/><rect x="1229.93" y="1193.00" width="4.2" height="25.00" rx="2.00" fill="#90c4fb"/><rect x="1229.93" y="1215.50" width="4.2" height="2.50" fill="#90c4fb"/><rect x="1237.28" y="1189.60" width="4.2" height="28.40" rx="2.00" fill="#90c4fb"/><rect x="1237.28" y="1215.50" width="4.2" height="2.50" fill="#90c4fb"/><rect x="1244.63" y="1185.00" width="4.2" height="33.00" rx="2.00" fill="#90c4fb"/><rect x="1244.63" y="1215.50" width="4.2" height="2.50" fill="#90c4fb"/><rect x="1251.98" y="1186.00" width="4.2" height="32.00" rx="2.00" fill="#90c4fb"/><rect x="1251.98" y="1215.50" width="4.2" height="2.50" fill="#90c4fb"/><rect x="1259.32" y="1185.80" width="4.2" height="32.20" rx="2.00" fill="#90c4fb"/><rect x="1259.32" y="1215.50" width="4.2" height="2.50" fill="#90c4fb"/><rect x="1266.67" y="1173.40" width="4.2" height="44.60" rx="2.00" fill="#90c4fb"/><rect x="1266.67" y="1215.50" width="4.2" height="2.50" fill="#90c4fb"/><rect x="1274.02" y="1150.50" width="4.2" height="67.50" rx="2.00" fill="#90c4fb"/><rect x="1274.02" y="1215.50" width="4.2" height="2.50" fill="#90c4fb"/><rect x="1281.37" y="1137.30" width="4.2" height="80.70" rx="2.00" fill="#90c4fb"/><rect x="1281.37" y="1215.50" width="4.2" height="2.50" fill="#90c4fb"/><rect x="1288.72" y="1209.00" width="4.2" height="9.00" rx="2.00" fill="#90c4fb"/><rect x="1288.72" y="1215.50" width="4.2" height="2.50" fill="#90c4fb"/><rect x="1296.07" y="1128.00" width="4.2" height="90.00" rx="2.00" fill="#90c4fb"/><rect x="1296.07" y="1215.50" width="4.2" height="2.50" fill="#90c4fb"/><rect x="1303.42" y="1171.00" width="4.2" height="47.00" rx="2.00" fill="#90c4fb"/><rect x="1303.42" y="1215.50" width="4.2" height="2.50" fill="#90c4fb"/><rect x="1310.77" y="1196.50" width="4.2" height="21.50" rx="2.00" fill="#90c4fb"/><rect x="1310.77" y="1215.50" width="4.2" height="2.50" fill="#90c4fb"/><rect x="1318.12" y="1189.60" width="4.2" height="28.40" rx="2.00" fill="#90c4fb"/><rect x="1318.12" y="1215.50" width="4.2" height="2.50" fill="#90c4fb"/><rect x="1325.47" y="1174.50" width="4.2" height="43.50" rx="2.00" fill="#90c4fb"/><rect x="1325.47" y="1215.50" width="4.2" height="2.50" fill="#90c4fb"/><rect x="1332.81" y="1167.60" width="4.2" height="50.40" rx="2.00" fill="#90c4fb"/><rect x="1332.81" y="1215.50" width="4.2" height="2.50" fill="#90c4fb"/><rect x="1340.16" y="1164.90" width="4.2" height="53.10" rx="2.00" fill="#90c4fb"/><rect x="1340.16" y="1215.50" width="4.2" height="2.50" fill="#90c4fb"/><rect x="1347.51" y="1173.10" width="4.2" height="44.90" rx="2.00" fill="#90c4fb"/><rect x="1347.51" y="1215.50" width="4.2" height="2.50" fill="#90c4fb"/><rect x="1354.86" y="1178.60" width="4.2" height="39.40" rx="2.00" fill="#90c4fb"/><rect x="1354.86" y="1215.50" width="4.2" height="2.50" fill="#90c4fb"/><rect x="1362.21" y="1203.10" width="4.2" height="14.90" rx="2.00" fill="#90c4fb"/><rect x="1362.21" y="1215.50" width="4.2" height="2.50" fill="#90c4fb"/><rect x="1369.56" y="1181.70" width="4.2" height="36.30" rx="2.00" fill="#90c4fb"/><rect x="1369.56" y="1215.50" width="4.2" height="2.50" fill="#90c4fb"/><rect x="1376.91" y="1065.70" width="4.2" height="152.30" rx="2.00" fill="#90c4fb"/><rect x="1376.91" y="1215.50" width="4.2" height="2.50" fill="#90c4fb"/><rect x="1384.26" y="1138.70" width="4.2" height="79.30" rx="2.00" fill="#90c4fb"/><rect x="1384.26" y="1215.50" width="4.2" height="2.50" fill="#90c4fb"/><rect x="1391.61" y="1146.10" width="4.2" height="71.90" rx="2.00" fill="#90c4fb"/><rect x="1391.61" y="1215.50" width="4.2" height="2.50" fill="#90c4fb"/><rect x="1398.95" y="1133.20" width="4.2" height="84.80" rx="2.00" fill="#90c4fb"/><rect x="1398.95" y="1215.50" width="4.2" height="2.50" fill="#90c4fb"/><rect x="1406.30" y="1084.70" width="4.2" height="133.30" rx="2.00" fill="#90c4fb"/><rect x="1406.30" y="1215.50" width="4.2" height="2.50" fill="#90c4fb"/><rect x="1413.65" y="1155.20" width="4.2" height="62.80" rx="2.00" fill="#90c4fb"/><rect x="1413.65" y="1215.50" width="4.2" height="2.50" fill="#90c4fb"/><rect x="1421.00" y="1166.20" width="4.2" height="51.80" rx="2.00" fill="#90c4fb"/><rect x="1421.00" y="1215.50" width="4.2" height="2.50" fill="#90c4fb"/><rect x="1428.35" y="1109.80" width="4.2" height="108.20" rx="2.00" fill="#90c4fb"/><rect x="1428.35" y="1215.50" width="4.2" height="2.50" fill="#90c4fb"/><rect x="1435.70" y="1097.40" width="4.2" height="120.60" rx="2.00" fill="#90c4fb"/><rect x="1435.70" y="1215.50" width="4.2" height="2.50" fill="#90c4fb"/><rect x="1443.05" y="1152.50" width="4.2" height="65.50" rx="2.00" fill="#90c4fb"/><rect x="1443.05" y="1215.50" width="4.2" height="2.50" fill="#90c4fb"/><rect x="1450.40" y="1153.30" width="4.2" height="64.70" rx="2.00" fill="#90c4fb"/><rect x="1450.40" y="1215.50" width="4.2" height="2.50" fill="#90c4fb"/><rect x="1457.75" y="1160.20" width="4.2" height="57.80" rx="2.00" fill="#90c4fb"/><rect x="1457.75" y="1215.50" width="4.2" height="2.50" fill="#90c4fb"/><rect x="1465.10" y="1189.10" width="4.2" height="28.90" rx="2.00" fill="#90c4fb"/><rect x="1465.10" y="1215.50" width="4.2" height="2.50" fill="#90c4fb"/><rect x="1472.45" y="1165.40" width="4.2" height="52.60" rx="2.00" fill="#90c4fb"/><rect x="1472.45" y="1215.50" width="4.2" height="2.50" fill="#90c4fb"/><rect x="1479.79" y="1212.50" width="4.2" height="5.50" rx="2.00" fill="#90c4fb"/><rect x="1479.79" y="1215.50" width="4.2" height="2.50" fill="#90c4fb"/><rect x="1487.14" y="1187.70" width="4.2" height="30.30" rx="2.00" fill="#90c4fb"/><rect x="1487.14" y="1215.50" width="4.2" height="2.50" fill="#90c4fb"/><rect x="1494.49" y="1182.80" width="4.2" height="35.20" rx="2.00" fill="#90c4fb"/><rect x="1494.49" y="1215.50" width="4.2" height="2.50" fill="#90c4fb"/><rect x="1501.84" y="1158.80" width="4.2" height="59.20" rx="2.00" fill="#90c4fb"/><rect x="1501.84" y="1215.50" width="4.2" height="2.50" fill="#90c4fb"/><rect x="1509.19" y="1164.90" width="4.2" height="53.10" rx="2.00" fill="#90c4fb"/><rect x="1509.19" y="1215.50" width="4.2" height="2.50" fill="#90c4fb"/><rect x="1516.54" y="1187.70" width="4.2" height="30.30" rx="2.00" fill="#90c4fb"/><rect x="1516.54" y="1215.50" width="4.2" height="2.50" fill="#90c4fb"/><rect x="1523.89" y="1141.50" width="4.2" height="76.50" rx="2.00" fill="#90c4fb"/><rect x="1523.89" y="1215.50" width="4.2" height="2.50" fill="#90c4fb"/><rect x="1531.24" y="1200.70" width="4.2" height="17.30" rx="2.00" fill="#90c4fb"/><rect x="1531.24" y="1215.50" width="4.2" height="2.50" fill="#90c4fb"/><rect x="1538.59" y="1193.20" width="4.2" height="24.80" rx="2.00" fill="#90c4fb"/><rect x="1538.59" y="1215.50" width="4.2" height="2.50" fill="#90c4fb"/><rect x="1545.93" y="1156.00" width="4.2" height="62.00" rx="2.00" fill="#90c4fb"/><rect x="1545.93" y="1215.50" width="4.2" height="2.50" fill="#90c4fb"/><rect x="1553.28" y="1116.10" width="4.2" height="101.90" rx="2.00" fill="#90c4fb"/><rect x="1553.28" y="1215.50" width="4.2" height="2.50" fill="#90c4fb"/><rect x="1560.63" y="1156.60" width="4.2" height="61.40" rx="2.00" fill="#90c4fb"/><rect x="1560.63" y="1215.50" width="4.2" height="2.50" fill="#90c4fb"/><rect x="1567.98" y="1158.80" width="4.2" height="59.20" rx="2.00" fill="#90c4fb"/><rect x="1567.98" y="1215.50" width="4.2" height="2.50" fill="#90c4fb"/><rect x="1575.33" y="1074.50" width="4.2" height="143.50" rx="2.00" fill="#90c4fb"/><rect x="1575.33" y="1215.50" width="4.2" height="2.50" fill="#90c4fb"/><rect x="1582.68" y="1071.80" width="4.2" height="146.20" rx="2.00" fill="#90c4fb"/><rect x="1582.68" y="1215.50" width="4.2" height="2.50" fill="#90c4fb"/><rect x="1590.03" y="1123.60" width="4.2" height="94.40" rx="2.00" fill="#90c4fb"/><rect x="1590.03" y="1215.50" width="4.2" height="2.50" fill="#90c4fb"/><rect x="1597.38" y="1130.40" width="4.2" height="87.60" rx="2.00" fill="#90c4fb"/><rect x="1597.38" y="1215.50" width="4.2" height="2.50" fill="#90c4fb"/><rect x="1604.73" y="1164.30" width="4.2" height="53.70" rx="2.00" fill="#90c4fb"/><rect x="1604.73" y="1215.50" width="4.2" height="2.50" fill="#90c4fb"/><rect x="1612.08" y="1201.50" width="4.2" height="16.50" rx="2.00" fill="#90c4fb"/><rect x="1612.08" y="1215.50" width="4.2" height="2.50" fill="#90c4fb"/><rect x="1619.43" y="1185.50" width="4.2" height="32.50" rx="2.00" fill="#90c4fb"/><rect x="1619.43" y="1215.50" width="4.2" height="2.50" fill="#90c4fb"/><rect x="1626.77" y="1155.50" width="4.2" height="62.50" rx="2.00" fill="#90c4fb"/><rect x="1626.77" y="1215.50" width="4.2" height="2.50" fill="#90c4fb"/><rect x="1634.12" y="1180.80" width="4.2" height="37.20" rx="2.00" fill="#90c4fb"/><rect x="1634.12" y="1215.50" width="4.2" height="2.50" fill="#90c4fb"/><rect x="1641.47" y="1194.60" width="4.2" height="23.40" rx="2.00" fill="#90c4fb"/><rect x="1641.47" y="1215.50" width="4.2" height="2.50" fill="#90c4fb"/><rect x="1648.82" y="1160.70" width="4.2" height="57.30" rx="2.00" fill="#90c4fb"/><rect x="1648.82" y="1215.50" width="4.2" height="2.50" fill="#90c4fb"/><rect x="1656.17" y="1136.00" width="4.2" height="82.00" rx="2.00" fill="#90c4fb"/><rect x="1656.17" y="1215.50" width="4.2" height="2.50" fill="#90c4fb"/><rect x="1663.52" y="1167.60" width="4.2" height="50.40" rx="2.00" fill="#90c4fb"/><rect x="1663.52" y="1215.50" width="4.2" height="2.50" fill="#90c4fb"/><rect x="1670.87" y="1197.90" width="4.2" height="20.10" rx="2.00" fill="#90c4fb"/><rect x="1670.87" y="1215.50" width="4.2" height="2.50" fill="#90c4fb"/><rect x="1678.22" y="1148.90" width="4.2" height="69.10" rx="2.00" fill="#90c4fb"/><rect x="1678.22" y="1215.50" width="4.2" height="2.50" fill="#90c4fb"/><rect x="1685.57" y="1205.30" width="4.2" height="12.70" rx="2.00" fill="#90c4fb"/><rect x="1685.57" y="1215.50" width="4.2" height="2.50" fill="#90c4fb"/><rect x="1692.91" y="1202.60" width="4.2" height="15.40" rx="2.00" fill="#90c4fb"/><rect x="1692.91" y="1215.50" width="4.2" height="2.50" fill="#90c4fb"/><rect x="1700.26" y="1172.60" width="4.2" height="45.40" rx="2.00" fill="#90c4fb"/><rect x="1700.26" y="1215.50" width="4.2" height="2.50" fill="#90c4fb"/><rect x="1707.61" y="1174.50" width="4.2" height="43.50" rx="2.00" fill="#90c4fb"/><rect x="1707.61" y="1215.50" width="4.2" height="2.50" fill="#90c4fb"/><rect x="1714.96" y="1206.40" width="4.2" height="11.60" rx="2.00" fill="#90c4fb"/><rect x="1714.96" y="1215.50" width="4.2" height="2.50" fill="#90c4fb"/><rect x="1722.31" y="1197.30" width="4.2" height="20.70" rx="2.00" fill="#90c4fb"/><rect x="1722.31" y="1215.50" width="4.2" height="2.50" fill="#90c4fb"/><rect x="1729.66" y="1183.30" width="4.2" height="34.70" rx="2.00" fill="#90c4fb"/><rect x="1729.66" y="1215.50" width="4.2" height="2.50" fill="#90c4fb"/><rect x="1737.01" y="1195.10" width="4.2" height="22.90" rx="2.00" fill="#90c4fb"/><rect x="1737.01" y="1215.50" width="4.2" height="2.50" fill="#90c4fb"/><rect x="1744.36" y="1176.40" width="4.2" height="41.60" rx="2.00" fill="#90c4fb"/><rect x="1744.36" y="1215.50" width="4.2" height="2.50" fill="#90c4fb"/><rect x="1751.71" y="1064.80" width="4.2" height="153.20" rx="2.00" fill="#90c4fb"/><rect x="1751.71" y="1215.50" width="4.2" height="2.50" fill="#90c4fb"/><rect x="1759.06" y="1097.30" width="4.2" height="120.70" rx="2.00" fill="#90c4fb"/><rect x="1759.06" y="1215.50" width="4.2" height="2.50" fill="#90c4fb"/><rect x="1766.41" y="1166.80" width="4.2" height="51.20" rx="2.00" fill="#90c4fb"/><rect x="1766.41" y="1215.50" width="4.2" height="2.50" fill="#90c4fb"/><rect x="1773.75" y="1148.30" width="4.2" height="69.70" rx="2.00" fill="#90c4fb"/><rect x="1773.75" y="1215.50" width="4.2" height="2.50" fill="#90c4fb"/><rect x="1781.10" y="1143.60" width="4.2" height="74.40" rx="2.00" fill="#90c4fb"/><rect x="1781.10" y="1215.50" width="4.2" height="2.50" fill="#90c4fb"/><rect x="1788.45" y="1088.20" width="4.2" height="129.80" rx="2.00" fill="#90c4fb"/><rect x="1788.45" y="1215.50" width="4.2" height="2.50" fill="#90c4fb"/><rect x="1795.80" y="1123.50" width="4.2" height="94.50" rx="2.00" fill="#90c4fb"/><rect x="1795.80" y="1215.50" width="4.2" height="2.50" fill="#90c4fb"/><rect x="1803.15" y="1141.70" width="4.2" height="76.30" rx="2.00" fill="#90c4fb"/><rect x="1803.15" y="1215.50" width="4.2" height="2.50" fill="#90c4fb"/><rect x="1810.50" y="1192.70" width="4.2" height="25.30" rx="2.00" fill="#90c4fb"/><rect x="1810.50" y="1215.50" width="4.2" height="2.50" fill="#90c4fb"/><rect x="1817.85" y="1195.40" width="4.2" height="22.60" rx="2.00" fill="#90c4fb"/><rect x="1817.85" y="1215.50" width="4.2" height="2.50" fill="#90c4fb"/><rect x="1825.20" y="1145.80" width="4.2" height="72.20" rx="2.00" fill="#90c4fb"/><rect x="1825.20" y="1215.50" width="4.2" height="2.50" fill="#90c4fb"/><rect x="1832.55" y="1181.60" width="4.2" height="36.40" rx="2.00" fill="#90c4fb"/><rect x="1832.55" y="1215.50" width="4.2" height="2.50" fill="#90c4fb"/><rect x="1839.89" y="1206.40" width="4.2" height="11.60" rx="2.00" fill="#90c4fb"/><rect x="1839.89" y="1215.50" width="4.2" height="2.50" fill="#90c4fb"/><rect x="1847.24" y="1195.40" width="4.2" height="22.60" rx="2.00" fill="#90c4fb"/><rect x="1847.24" y="1215.50" width="4.2" height="2.50" fill="#90c4fb"/><rect x="1854.59" y="1196.50" width="4.2" height="21.50" rx="2.00" fill="#90c4fb"/><rect x="1854.59" y="1215.50" width="4.2" height="2.50" fill="#90c4fb"/><rect x="1861.94" y="1217.20" width="4.2" height="0.80" rx="0.40" fill="#90c4fb"/><rect x="1869.29" y="1167.90" width="4.2" height="50.10" rx="2.00" fill="#90c4fb"/><rect x="1869.29" y="1215.50" width="4.2" height="2.50" fill="#90c4fb"/><rect x="1876.64" y="947.20" width="4.2" height="270.80" rx="2.00" fill="#90c4fb"/><rect x="1876.64" y="1215.50" width="4.2" height="2.50" fill="#90c4fb"/><rect x="1883.99" y="1189.90" width="4.2" height="28.10" rx="2.00" fill="#90c4fb"/><rect x="1883.99" y="1215.50" width="4.2" height="2.50" fill="#90c4fb"/><rect x="1891.34" y="1165.40" width="4.2" height="52.60" rx="2.00" fill="#90c4fb"/><rect x="1891.34" y="1215.50" width="4.2" height="2.50" fill="#90c4fb"/><rect x="1898.69" y="1174.00" width="4.2" height="44.00" rx="2.00" fill="#90c4fb"/><rect x="1898.69" y="1215.50" width="4.2" height="2.50" fill="#90c4fb"/><rect x="1906.04" y="1180.80" width="4.2" height="37.20" rx="2.00" fill="#90c4fb"/><rect x="1906.04" y="1215.50" width="4.2" height="2.50" fill="#90c4fb"/><rect x="1913.39" y="1167.90" width="4.2" height="50.10" rx="2.00" fill="#90c4fb"/><rect x="1913.39" y="1215.50" width="4.2" height="2.50" fill="#90c4fb"/><rect x="1920.73" y="1160.20" width="4.2" height="57.80" rx="2.00" fill="#90c4fb"/><rect x="1920.73" y="1215.50" width="4.2" height="2.50" fill="#90c4fb"/><rect x="1928.08" y="1165.40" width="4.2" height="52.60" rx="2.00" fill="#90c4fb"/><rect x="1928.08" y="1215.50" width="4.2" height="2.50" fill="#90c4fb"/><rect x="1935.43" y="1150.20" width="4.2" height="67.80" rx="2.00" fill="#90c4fb"/><rect x="1935.43" y="1215.50" width="4.2" height="2.50" fill="#90c4fb"/></svg>
<div class="t " style="left:683px;top:1207.72px;font-size:21px;color:#a1a1a1;font-weight:400;letter-spacing:0.4px;transform:translateX(-100%);">0</div>
<div class="t " style="left:683px;top:1112.72px;font-size:21px;color:#a1a1a1;font-weight:400;letter-spacing:0.4px;transform:translateX(-100%);">7500</div>
<div class="t " style="left:683px;top:1017.72px;font-size:21px;color:#a1a1a1;font-weight:400;letter-spacing:0.4px;transform:translateX(-100%);">15000</div>
<div class="t " style="left:683px;top:922.72px;font-size:21px;color:#a1a1a1;font-weight:400;letter-spacing:0.4px;transform:translateX(-100%);">22500</div>
<div class="t " style="left:683px;top:827.72px;font-size:21px;color:#a1a1a1;font-weight:400;letter-spacing:0.4px;transform:translateX(-100%);">30000</div>
<div class="t" style="left:699.40px;top:1234.00px;font-size:21px;color:#a1a1a1;letter-spacing:-0.35px;transform-origin:100% 0;transform:translateX(-100%) rotate(-45deg);">Jan 1, 11:00</div>
<div class="t" style="left:758.19px;top:1234.00px;font-size:21px;color:#a1a1a1;letter-spacing:-0.35px;transform-origin:100% 0;transform:translateX(-100%) rotate(-45deg);">Jan 1, 19:00</div>
<div class="t" style="left:816.98px;top:1234.00px;font-size:21px;color:#a1a1a1;letter-spacing:-0.35px;transform-origin:100% 0;transform:translateX(-100%) rotate(-45deg);">Jan 2, 03:00</div>
<div class="t" style="left:875.78px;top:1234.00px;font-size:21px;color:#a1a1a1;letter-spacing:-0.35px;transform-origin:100% 0;transform:translateX(-100%) rotate(-45deg);">Jan 2, 11:00</div>
<div class="t" style="left:934.57px;top:1234.00px;font-size:21px;color:#a1a1a1;letter-spacing:-0.35px;transform-origin:100% 0;transform:translateX(-100%) rotate(-45deg);">Jan 2, 19:00</div>
<div class="t" style="left:993.36px;top:1234.00px;font-size:21px;color:#a1a1a1;letter-spacing:-0.35px;transform-origin:100% 0;transform:translateX(-100%) rotate(-45deg);">Jan 3, 03:00</div>
<div class="t" style="left:1052.15px;top:1234.00px;font-size:21px;color:#a1a1a1;letter-spacing:-0.35px;transform-origin:100% 0;transform:translateX(-100%) rotate(-45deg);">Jan 3, 11:00</div>
<div class="t" style="left:1110.94px;top:1234.00px;font-size:21px;color:#a1a1a1;letter-spacing:-0.35px;transform-origin:100% 0;transform:translateX(-100%) rotate(-45deg);">Jan 3, 19:00</div>
<div class="t" style="left:1169.74px;top:1234.00px;font-size:21px;color:#a1a1a1;letter-spacing:-0.35px;transform-origin:100% 0;transform:translateX(-100%) rotate(-45deg);">Jan 4, 03:00</div>
<div class="t" style="left:1228.53px;top:1234.00px;font-size:21px;color:#a1a1a1;letter-spacing:-0.35px;transform-origin:100% 0;transform:translateX(-100%) rotate(-45deg);">Jan 4, 11:00</div>
<div class="t" style="left:1287.32px;top:1234.00px;font-size:21px;color:#a1a1a1;letter-spacing:-0.35px;transform-origin:100% 0;transform:translateX(-100%) rotate(-45deg);">Jan 4, 19:00</div>
<div class="t" style="left:1346.11px;top:1234.00px;font-size:21px;color:#a1a1a1;letter-spacing:-0.35px;transform-origin:100% 0;transform:translateX(-100%) rotate(-45deg);">Jan 5, 03:00</div>
<div class="t" style="left:1404.90px;top:1234.00px;font-size:21px;color:#a1a1a1;letter-spacing:-0.35px;transform-origin:100% 0;transform:translateX(-100%) rotate(-45deg);">Jan 5, 11:00</div>
<div class="t" style="left:1463.70px;top:1234.00px;font-size:21px;color:#a1a1a1;letter-spacing:-0.35px;transform-origin:100% 0;transform:translateX(-100%) rotate(-45deg);">Jan 5, 19:00</div>
<div class="t" style="left:1522.49px;top:1234.00px;font-size:21px;color:#a1a1a1;letter-spacing:-0.35px;transform-origin:100% 0;transform:translateX(-100%) rotate(-45deg);">Jan 6, 03:00</div>
<div class="t" style="left:1581.28px;top:1234.00px;font-size:21px;color:#a1a1a1;letter-spacing:-0.35px;transform-origin:100% 0;transform:translateX(-100%) rotate(-45deg);">Jan 6, 11:00</div>
<div class="t" style="left:1640.07px;top:1234.00px;font-size:21px;color:#a1a1a1;letter-spacing:-0.35px;transform-origin:100% 0;transform:translateX(-100%) rotate(-45deg);">Jan 6, 19:00</div>
<div class="t" style="left:1698.86px;top:1234.00px;font-size:21px;color:#a1a1a1;letter-spacing:-0.35px;transform-origin:100% 0;transform:translateX(-100%) rotate(-45deg);">Jan 7, 03:00</div>
<div class="t" style="left:1757.66px;top:1234.00px;font-size:21px;color:#a1a1a1;letter-spacing:-0.35px;transform-origin:100% 0;transform:translateX(-100%) rotate(-45deg);">Jan 7, 11:00</div>
<div class="t" style="left:1816.45px;top:1234.00px;font-size:21px;color:#a1a1a1;letter-spacing:-0.35px;transform-origin:100% 0;transform:translateX(-100%) rotate(-45deg);">Jan 7, 19:00</div>
<div class="t" style="left:1875.24px;top:1234.00px;font-size:21px;color:#a1a1a1;letter-spacing:-0.35px;transform-origin:100% 0;transform:translateX(-100%) rotate(-45deg);">Jan 8, 03:00</div>
<div class="t" style="left:1934.03px;top:1234.00px;font-size:21px;color:#a1a1a1;letter-spacing:-0.35px;transform-origin:100% 0;transform:translateX(-100%) rotate(-45deg);">Jan 8, 11:00</div>
<svg style="position:absolute;left:0;top:0" width="3556" height="1980" viewBox="0 0 3556 1980"><rect x="2230.60" y="1125.00" width="4.2" height="93.00" rx="2.00" fill="#3d7ff0"/><rect x="2230.60" y="1215.50" width="4.2" height="2.50" fill="#3d7ff0"/><rect x="2237.83" y="1108.40" width="4.2" height="109.60" rx="2.00" fill="#3d7ff0"/><rect x="2237.83" y="1215.50" width="4.2" height="2.50" fill="#3d7ff0"/><rect x="2245.07" y="992.80" width="4.2" height="225.20" rx="2.00" fill="#3d7ff0"/><rect x="2245.07" y="1215.50" width="4.2" height="2.50" fill="#3d7ff0"/><rect x="2252.30" y="1077.60" width="4.2" height="140.40" rx="2.00" fill="#3d7ff0"/><rect x="2252.30" y="1215.50" width="4.2" height="2.50" fill="#3d7ff0"/><rect x="2259.53" y="1083.60" width="4.2" height="134.40" rx="2.00" fill="#3d7ff0"/><rect x="2259.53" y="1215.50" width="4.2" height="2.50" fill="#3d7ff0"/><rect x="2266.76" y="1043.70" width="4.2" height="174.30" rx="2.00" fill="#3d7ff0"/><rect x="2266.76" y="1215.50" width="4.2" height="2.50" fill="#3d7ff0"/><rect x="2274.00" y="1147.50" width="4.2" height="70.50" rx="2.00" fill="#3d7ff0"/><rect x="2274.00" y="1215.50" width="4.2" height="2.50" fill="#3d7ff0"/><rect x="2281.23" y="1149.70" width="4.2" height="68.30" rx="2.00" fill="#3d7ff0"/><rect x="2281.23" y="1215.50" width="4.2" height="2.50" fill="#3d7ff0"/><rect x="2288.46" y="1140.10" width="4.2" height="77.90" rx="2.00" fill="#3d7ff0"/><rect x="2288.46" y="1215.50" width="4.2" height="2.50" fill="#3d7ff0"/><rect x="2295.70" y="1187.70" width="4.2" height="30.30" rx="2.00" fill="#3d7ff0"/><rect x="2295.70" y="1215.50" width="4.2" height="2.50" fill="#3d7ff0"/><rect x="2302.93" y="1165.70" width="4.2" height="52.30" rx="2.00" fill="#3d7ff0"/><rect x="2302.93" y="1215.50" width="4.2" height="2.50" fill="#3d7ff0"/><rect x="2310.16" y="1151.10" width="4.2" height="66.90" rx="2.00" fill="#3d7ff0"/><rect x="2310.16" y="1215.50" width="4.2" height="2.50" fill="#3d7ff0"/><rect x="2317.40" y="1070.70" width="4.2" height="147.30" rx="2.00" fill="#3d7ff0"/><rect x="2317.40" y="1215.50" width="4.2" height="2.50" fill="#3d7ff0"/><rect x="2324.63" y="1163.50" width="4.2" height="54.50" rx="2.00" fill="#3d7ff0"/><rect x="2324.63" y="1215.50" width="4.2" height="2.50" fill="#3d7ff0"/><rect x="2331.86" y="1181.40" width="4.2" height="36.60" rx="2.00" fill="#3d7ff0"/><rect x="2331.86" y="1215.50" width="4.2" height="2.50" fill="#3d7ff0"/><rect x="2339.09" y="1160.20" width="4.2" height="57.80" rx="2.00" fill="#3d7ff0"/><rect x="2339.09" y="1215.50" width="4.2" height="2.50" fill="#3d7ff0"/><rect x="2346.33" y="1139.80" width="4.2" height="78.20" rx="2.00" fill="#3d7ff0"/><rect x="2346.33" y="1215.50" width="4.2" height="2.50" fill="#3d7ff0"/><rect x="2353.56" y="1176.70" width="4.2" height="41.30" rx="2.00" fill="#3d7ff0"/><rect x="2353.56" y="1215.50" width="4.2" height="2.50" fill="#3d7ff0"/><rect x="2360.79" y="1108.40" width="4.2" height="109.60" rx="2.00" fill="#3d7ff0"/><rect x="2360.79" y="1215.50" width="4.2" height="2.50" fill="#3d7ff0"/><rect x="2368.03" y="1129.10" width="4.2" height="88.90" rx="2.00" fill="#3d7ff0"/><rect x="2368.03" y="1215.50" width="4.2" height="2.50" fill="#3d7ff0"/><rect x="2375.26" y="1144.50" width="4.2" height="73.50" rx="2.00" fill="#3d7ff0"/><rect x="2375.26" y="1215.50" width="4.2" height="2.50" fill="#3d7ff0"/><rect x="2382.49" y="1087.00" width="4.2" height="131.00" rx="2.00" fill="#3d7ff0"/><rect x="2382.49" y="1215.50" width="4.2" height="2.50" fill="#3d7ff0"/><rect x="2389.73" y="1114.00" width="4.2" height="104.00" rx="2.00" fill="#3d7ff0"/><rect x="2389.73" y="1215.50" width="4.2" height="2.50" fill="#3d7ff0"/><rect x="2396.96" y="1019.20" width="4.2" height="198.80" rx="2.00" fill="#3d7ff0"/><rect x="2396.96" y="1215.50" width="4.2" height="2.50" fill="#3d7ff0"/><rect x="2404.19" y="1056.70" width="4.2" height="161.30" rx="2.00" fill="#3d7ff0"/><rect x="2404.19" y="1215.50" width="4.2" height="2.50" fill="#3d7ff0"/><rect x="2411.42" y="1061.10" width="4.2" height="156.90" rx="2.00" fill="#3d7ff0"/><rect x="2411.42" y="1215.50" width="4.2" height="2.50" fill="#3d7ff0"/><rect x="2418.66" y="1052.30" width="4.2" height="165.70" rx="2.00" fill="#3d7ff0"/><rect x="2418.66" y="1215.50" width="4.2" height="2.50" fill="#3d7ff0"/><rect x="2425.89" y="1085.30" width="4.2" height="132.70" rx="2.00" fill="#3d7ff0"/><rect x="2425.89" y="1215.50" width="4.2" height="2.50" fill="#3d7ff0"/><rect x="2433.12" y="1107.60" width="4.2" height="110.40" rx="2.00" fill="#3d7ff0"/><rect x="2433.12" y="1215.50" width="4.2" height="2.50" fill="#3d7ff0"/><rect x="2440.36" y="1072.90" width="4.2" height="145.10" rx="2.00" fill="#3d7ff0"/><rect x="2440.36" y="1215.50" width="4.2" height="2.50" fill="#3d7ff0"/><rect x="2447.59" y="1003.00" width="4.2" height="215.00" rx="2.00" fill="#3d7ff0"/><rect x="2447.59" y="1215.50" width="4.2" height="2.50" fill="#3d7ff0"/><rect x="2454.82" y="927.50" width="4.2" height="290.50" rx="2.00" fill="#3d7ff0"/><rect x="2454.82" y="1215.50" width="4.2" height="2.50" fill="#3d7ff0"/><rect x="2462.06" y="1029.10" width="4.2" height="188.90" rx="2.00" fill="#3d7ff0"/><rect x="2462.06" y="1215.50" width="4.2" height="2.50" fill="#3d7ff0"/><rect x="2469.29" y="1164.00" width="4.2" height="54.00" rx="2.00" fill="#3d7ff0"/><rect x="2469.29" y="1215.50" width="4.2" height="2.50" fill="#3d7ff0"/><rect x="2476.52" y="1186.30" width="4.2" height="31.70" rx="2.00" fill="#3d7ff0"/><rect x="2476.52" y="1215.50" width="4.2" height="2.50" fill="#3d7ff0"/><rect x="2483.76" y="1210.30" width="4.2" height="7.70" rx="2.00" fill="#3d7ff0"/><rect x="2483.76" y="1215.50" width="4.2" height="2.50" fill="#3d7ff0"/><rect x="2490.99" y="1183.90" width="4.2" height="34.10" rx="2.00" fill="#3d7ff0"/><rect x="2490.99" y="1215.50" width="4.2" height="2.50" fill="#3d7ff0"/><rect x="2498.22" y="1148.90" width="4.2" height="69.10" rx="2.00" fill="#3d7ff0"/><rect x="2498.22" y="1215.50" width="4.2" height="2.50" fill="#3d7ff0"/><rect x="2505.45" y="1176.40" width="4.2" height="41.60" rx="2.00" fill="#3d7ff0"/><rect x="2505.45" y="1215.50" width="4.2" height="2.50" fill="#3d7ff0"/><rect x="2512.69" y="1172.30" width="4.2" height="45.70" rx="2.00" fill="#3d7ff0"/><rect x="2512.69" y="1215.50" width="4.2" height="2.50" fill="#3d7ff0"/><rect x="2519.92" y="1151.90" width="4.2" height="66.10" rx="2.00" fill="#3d7ff0"/><rect x="2519.92" y="1215.50" width="4.2" height="2.50" fill="#3d7ff0"/><rect x="2527.15" y="1079.00" width="4.2" height="139.00" rx="2.00" fill="#3d7ff0"/><rect x="2527.15" y="1215.50" width="4.2" height="2.50" fill="#3d7ff0"/><rect x="2534.39" y="1125.50" width="4.2" height="92.50" rx="2.00" fill="#3d7ff0"/><rect x="2534.39" y="1215.50" width="4.2" height="2.50" fill="#3d7ff0"/><rect x="2541.62" y="1153.80" width="4.2" height="64.20" rx="2.00" fill="#3d7ff0"/><rect x="2541.62" y="1215.50" width="4.2" height="2.50" fill="#3d7ff0"/><rect x="2548.85" y="1160.20" width="4.2" height="57.80" rx="2.00" fill="#3d7ff0"/><rect x="2548.85" y="1215.50" width="4.2" height="2.50" fill="#3d7ff0"/><rect x="2556.09" y="1153.60" width="4.2" height="64.40" rx="2.00" fill="#3d7ff0"/><rect x="2556.09" y="1215.50" width="4.2" height="2.50" fill="#3d7ff0"/><rect x="2563.32" y="1131.30" width="4.2" height="86.70" rx="2.00" fill="#3d7ff0"/><rect x="2563.32" y="1215.50" width="4.2" height="2.50" fill="#3d7ff0"/><rect x="2570.55" y="1159.60" width="4.2" height="58.40" rx="2.00" fill="#3d7ff0"/><rect x="2570.55" y="1215.50" width="4.2" height="2.50" fill="#3d7ff0"/><rect x="2577.78" y="1054.50" width="4.2" height="163.50" rx="2.00" fill="#3d7ff0"/><rect x="2577.78" y="1215.50" width="4.2" height="2.50" fill="#3d7ff0"/><rect x="2585.02" y="1103.70" width="4.2" height="114.30" rx="2.00" fill="#3d7ff0"/><rect x="2585.02" y="1215.50" width="4.2" height="2.50" fill="#3d7ff0"/><rect x="2592.25" y="1019.00" width="4.2" height="199.00" rx="2.00" fill="#3d7ff0"/><rect x="2592.25" y="1215.50" width="4.2" height="2.50" fill="#3d7ff0"/><rect x="2599.48" y="925.30" width="4.2" height="292.70" rx="2.00" fill="#3d7ff0"/><rect x="2599.48" y="1215.50" width="4.2" height="2.50" fill="#3d7ff0"/><rect x="2606.72" y="1010.10" width="4.2" height="207.90" rx="2.00" fill="#3d7ff0"/><rect x="2606.72" y="1215.50" width="4.2" height="2.50" fill="#3d7ff0"/><rect x="2613.95" y="1126.60" width="4.2" height="91.40" rx="2.00" fill="#3d7ff0"/><rect x="2613.95" y="1215.50" width="4.2" height="2.50" fill="#3d7ff0"/><rect x="2621.18" y="1101.50" width="4.2" height="116.50" rx="2.00" fill="#3d7ff0"/><rect x="2621.18" y="1215.50" width="4.2" height="2.50" fill="#3d7ff0"/><rect x="2628.41" y="1071.80" width="4.2" height="146.20" rx="2.00" fill="#3d7ff0"/><rect x="2628.41" y="1215.50" width="4.2" height="2.50" fill="#3d7ff0"/><rect x="2635.65" y="1166.80" width="4.2" height="51.20" rx="2.00" fill="#3d7ff0"/><rect x="2635.65" y="1215.50" width="4.2" height="2.50" fill="#3d7ff0"/><rect x="2642.88" y="1176.10" width="4.2" height="41.90" rx="2.00" fill="#3d7ff0"/><rect x="2642.88" y="1215.50" width="4.2" height="2.50" fill="#3d7ff0"/><rect x="2650.11" y="1107.00" width="4.2" height="111.00" rx="2.00" fill="#3d7ff0"/><rect x="2650.11" y="1215.50" width="4.2" height="2.50" fill="#3d7ff0"/><rect x="2657.35" y="1146.10" width="4.2" height="71.90" rx="2.00" fill="#3d7ff0"/><rect x="2657.35" y="1215.50" width="4.2" height="2.50" fill="#3d7ff0"/><rect x="2664.58" y="1145.00" width="4.2" height="73.00" rx="2.00" fill="#3d7ff0"/><rect x="2664.58" y="1215.50" width="4.2" height="2.50" fill="#3d7ff0"/><rect x="2671.81" y="1170.60" width="4.2" height="47.40" rx="2.00" fill="#3d7ff0"/><rect x="2671.81" y="1215.50" width="4.2" height="2.50" fill="#3d7ff0"/><rect x="2679.05" y="1136.00" width="4.2" height="82.00" rx="2.00" fill="#3d7ff0"/><rect x="2679.05" y="1215.50" width="4.2" height="2.50" fill="#3d7ff0"/><rect x="2686.28" y="1041.50" width="4.2" height="176.50" rx="2.00" fill="#3d7ff0"/><rect x="2686.28" y="1215.50" width="4.2" height="2.50" fill="#3d7ff0"/><rect x="2693.51" y="1115.30" width="4.2" height="102.70" rx="2.00" fill="#3d7ff0"/><rect x="2693.51" y="1215.50" width="4.2" height="2.50" fill="#3d7ff0"/><rect x="2700.74" y="1088.30" width="4.2" height="129.70" rx="2.00" fill="#3d7ff0"/><rect x="2700.74" y="1215.50" width="4.2" height="2.50" fill="#3d7ff0"/><rect x="2707.98" y="1046.50" width="4.2" height="171.50" rx="2.00" fill="#3d7ff0"/><rect x="2707.98" y="1215.50" width="4.2" height="2.50" fill="#3d7ff0"/><rect x="2715.21" y="1100.20" width="4.2" height="117.80" rx="2.00" fill="#3d7ff0"/><rect x="2715.21" y="1215.50" width="4.2" height="2.50" fill="#3d7ff0"/><rect x="2722.44" y="1074.00" width="4.2" height="144.00" rx="2.00" fill="#3d7ff0"/><rect x="2722.44" y="1215.50" width="4.2" height="2.50" fill="#3d7ff0"/><rect x="2729.68" y="1010.70" width="4.2" height="207.30" rx="2.00" fill="#3d7ff0"/><rect x="2729.68" y="1215.50" width="4.2" height="2.50" fill="#3d7ff0"/><rect x="2736.91" y="1072.90" width="4.2" height="145.10" rx="2.00" fill="#3d7ff0"/><rect x="2736.91" y="1215.50" width="4.2" height="2.50" fill="#3d7ff0"/><rect x="2744.14" y="1068.20" width="4.2" height="149.80" rx="2.00" fill="#3d7ff0"/><rect x="2744.14" y="1215.50" width="4.2" height="2.50" fill="#3d7ff0"/><rect x="2751.38" y="1015.10" width="4.2" height="202.90" rx="2.00" fill="#3d7ff0"/><rect x="2751.38" y="1215.50" width="4.2" height="2.50" fill="#3d7ff0"/><rect x="2758.61" y="1064.60" width="4.2" height="153.40" rx="2.00" fill="#3d7ff0"/><rect x="2758.61" y="1215.50" width="4.2" height="2.50" fill="#3d7ff0"/><rect x="2765.84" y="1047.30" width="4.2" height="170.70" rx="2.00" fill="#3d7ff0"/><rect x="2765.84" y="1215.50" width="4.2" height="2.50" fill="#3d7ff0"/><rect x="2773.07" y="1088.30" width="4.2" height="129.70" rx="2.00" fill="#3d7ff0"/><rect x="2773.07" y="1215.50" width="4.2" height="2.50" fill="#3d7ff0"/><rect x="2780.31" y="1138.70" width="4.2" height="79.30" rx="2.00" fill="#3d7ff0"/><rect x="2780.31" y="1215.50" width="4.2" height="2.50" fill="#3d7ff0"/><rect x="2787.54" y="1101.50" width="4.2" height="116.50" rx="2.00" fill="#3d7ff0"/><rect x="2787.54" y="1215.50" width="4.2" height="2.50" fill="#3d7ff0"/><rect x="2794.77" y="1087.00" width="4.2" height="131.00" rx="2.00" fill="#3d7ff0"/><rect x="2794.77" y="1215.50" width="4.2" height="2.50" fill="#3d7ff0"/><rect x="2802.01" y="1064.60" width="4.2" height="153.40" rx="2.00" fill="#3d7ff0"/><rect x="2802.01" y="1215.50" width="4.2" height="2.50" fill="#3d7ff0"/><rect x="2809.24" y="1162.70" width="4.2" height="55.30" rx="2.00" fill="#3d7ff0"/><rect x="2809.24" y="1215.50" width="4.2" height="2.50" fill="#3d7ff0"/><rect x="2816.47" y="1132.40" width="4.2" height="85.60" rx="2.00" fill="#3d7ff0"/><rect x="2816.47" y="1215.50" width="4.2" height="2.50" fill="#3d7ff0"/><rect x="2823.71" y="1147.80" width="4.2" height="70.20" rx="2.00" fill="#3d7ff0"/><rect x="2823.71" y="1215.50" width="4.2" height="2.50" fill="#3d7ff0"/><rect x="2830.94" y="1147.00" width="4.2" height="71.00" rx="2.00" fill="#3d7ff0"/><rect x="2830.94" y="1215.50" width="4.2" height="2.50" fill="#3d7ff0"/><rect x="2838.17" y="1096.00" width="4.2" height="122.00" rx="2.00" fill="#3d7ff0"/><rect x="2838.17" y="1215.50" width="4.2" height="2.50" fill="#3d7ff0"/><rect x="2845.40" y="1087.00" width="4.2" height="131.00" rx="2.00" fill="#3d7ff0"/><rect x="2845.40" y="1215.50" width="4.2" height="2.50" fill="#3d7ff0"/><rect x="2852.64" y="1126.30" width="4.2" height="91.70" rx="2.00" fill="#3d7ff0"/><rect x="2852.64" y="1215.50" width="4.2" height="2.50" fill="#3d7ff0"/><rect x="2859.87" y="1080.90" width="4.2" height="137.10" rx="2.00" fill="#3d7ff0"/><rect x="2859.87" y="1215.50" width="4.2" height="2.50" fill="#3d7ff0"/><rect x="2867.10" y="1107.00" width="4.2" height="111.00" rx="2.00" fill="#3d7ff0"/><rect x="2867.10" y="1215.50" width="4.2" height="2.50" fill="#3d7ff0"/><rect x="2874.34" y="1060.80" width="4.2" height="157.20" rx="2.00" fill="#3d7ff0"/><rect x="2874.34" y="1215.50" width="4.2" height="2.50" fill="#3d7ff0"/><rect x="2881.57" y="1025.80" width="4.2" height="192.20" rx="2.00" fill="#3d7ff0"/><rect x="2881.57" y="1215.50" width="4.2" height="2.50" fill="#3d7ff0"/><rect x="2888.80" y="1017.80" width="4.2" height="200.20" rx="2.00" fill="#3d7ff0"/><rect x="2888.80" y="1215.50" width="4.2" height="2.50" fill="#3d7ff0"/><rect x="2896.04" y="997.00" width="4.2" height="221.00" rx="2.00" fill="#3d7ff0"/><rect x="2896.04" y="1215.50" width="4.2" height="2.50" fill="#3d7ff0"/><rect x="2903.27" y="1097.40" width="4.2" height="120.60" rx="2.00" fill="#3d7ff0"/><rect x="2903.27" y="1215.50" width="4.2" height="2.50" fill="#3d7ff0"/><rect x="2910.50" y="1053.40" width="4.2" height="164.60" rx="2.00" fill="#3d7ff0"/><rect x="2910.50" y="1215.50" width="4.2" height="2.50" fill="#3d7ff0"/><rect x="2917.74" y="1035.50" width="4.2" height="182.50" rx="2.00" fill="#3d7ff0"/><rect x="2917.74" y="1215.50" width="4.2" height="2.50" fill="#3d7ff0"/><rect x="2924.97" y="993.90" width="4.2" height="224.10" rx="2.00" fill="#3d7ff0"/><rect x="2924.97" y="1215.50" width="4.2" height="2.50" fill="#3d7ff0"/><rect x="2932.20" y="973.50" width="4.2" height="244.50" rx="2.00" fill="#3d7ff0"/><rect x="2932.20" y="1215.50" width="4.2" height="2.50" fill="#3d7ff0"/><rect x="2939.43" y="902.00" width="4.2" height="316.00" rx="2.00" fill="#3d7ff0"/><rect x="2939.43" y="1215.50" width="4.2" height="2.50" fill="#3d7ff0"/><rect x="2946.67" y="972.10" width="4.2" height="245.90" rx="2.00" fill="#3d7ff0"/><rect x="2946.67" y="1215.50" width="4.2" height="2.50" fill="#3d7ff0"/><rect x="2953.90" y="970.20" width="4.2" height="247.80" rx="2.00" fill="#3d7ff0"/><rect x="2953.90" y="1215.50" width="4.2" height="2.50" fill="#3d7ff0"/><rect x="2961.13" y="1040.40" width="4.2" height="177.60" rx="2.00" fill="#3d7ff0"/><rect x="2961.13" y="1215.50" width="4.2" height="2.50" fill="#3d7ff0"/><rect x="2968.37" y="1009.90" width="4.2" height="208.10" rx="2.00" fill="#3d7ff0"/><rect x="2968.37" y="1215.50" width="4.2" height="2.50" fill="#3d7ff0"/><rect x="2975.60" y="1092.70" width="4.2" height="125.30" rx="2.00" fill="#3d7ff0"/><rect x="2975.60" y="1215.50" width="4.2" height="2.50" fill="#3d7ff0"/><rect x="2982.83" y="1158.00" width="4.2" height="60.00" rx="2.00" fill="#3d7ff0"/><rect x="2982.83" y="1215.50" width="4.2" height="2.50" fill="#3d7ff0"/><rect x="2990.07" y="1129.60" width="4.2" height="88.40" rx="2.00" fill="#3d7ff0"/><rect x="2990.07" y="1215.50" width="4.2" height="2.50" fill="#3d7ff0"/><rect x="2997.30" y="1098.00" width="4.2" height="120.00" rx="2.00" fill="#3d7ff0"/><rect x="2997.30" y="1215.50" width="4.2" height="2.50" fill="#3d7ff0"/><rect x="3004.53" y="1030.50" width="4.2" height="187.50" rx="2.00" fill="#3d7ff0"/><rect x="3004.53" y="1215.50" width="4.2" height="2.50" fill="#3d7ff0"/><rect x="3011.76" y="1122.70" width="4.2" height="95.30" rx="2.00" fill="#3d7ff0"/><rect x="3011.76" y="1215.50" width="4.2" height="2.50" fill="#3d7ff0"/><rect x="3019.00" y="1043.70" width="4.2" height="174.30" rx="2.00" fill="#3d7ff0"/><rect x="3019.00" y="1215.50" width="4.2" height="2.50" fill="#3d7ff0"/><rect x="3026.23" y="1087.00" width="4.2" height="131.00" rx="2.00" fill="#3d7ff0"/><rect x="3026.23" y="1215.50" width="4.2" height="2.50" fill="#3d7ff0"/><rect x="3033.46" y="1039.10" width="4.2" height="178.90" rx="2.00" fill="#3d7ff0"/><rect x="3033.46" y="1215.50" width="4.2" height="2.50" fill="#3d7ff0"/><rect x="3040.70" y="1111.70" width="4.2" height="106.30" rx="2.00" fill="#3d7ff0"/><rect x="3040.70" y="1215.50" width="4.2" height="2.50" fill="#3d7ff0"/><rect x="3047.93" y="977.60" width="4.2" height="240.40" rx="2.00" fill="#3d7ff0"/><rect x="3047.93" y="1215.50" width="4.2" height="2.50" fill="#3d7ff0"/><rect x="3055.16" y="1111.70" width="4.2" height="106.30" rx="2.00" fill="#3d7ff0"/><rect x="3055.16" y="1215.50" width="4.2" height="2.50" fill="#3d7ff0"/><rect x="3062.39" y="1078.10" width="4.2" height="139.90" rx="2.00" fill="#3d7ff0"/><rect x="3062.39" y="1215.50" width="4.2" height="2.50" fill="#3d7ff0"/><rect x="3069.63" y="1085.00" width="4.2" height="133.00" rx="2.00" fill="#3d7ff0"/><rect x="3069.63" y="1215.50" width="4.2" height="2.50" fill="#3d7ff0"/><rect x="3076.86" y="1135.40" width="4.2" height="82.60" rx="2.00" fill="#3d7ff0"/><rect x="3076.86" y="1215.50" width="4.2" height="2.50" fill="#3d7ff0"/><rect x="3084.09" y="1141.50" width="4.2" height="76.50" rx="2.00" fill="#3d7ff0"/><rect x="3084.09" y="1215.50" width="4.2" height="2.50" fill="#3d7ff0"/><rect x="3091.33" y="1080.30" width="4.2" height="137.70" rx="2.00" fill="#3d7ff0"/><rect x="3091.33" y="1215.50" width="4.2" height="2.50" fill="#3d7ff0"/><rect x="3098.56" y="1021.70" width="4.2" height="196.30" rx="2.00" fill="#3d7ff0"/><rect x="3098.56" y="1215.50" width="4.2" height="2.50" fill="#3d7ff0"/><rect x="3105.79" y="1056.70" width="4.2" height="161.30" rx="2.00" fill="#3d7ff0"/><rect x="3105.79" y="1215.50" width="4.2" height="2.50" fill="#3d7ff0"/><rect x="3113.03" y="997.00" width="4.2" height="221.00" rx="2.00" fill="#3d7ff0"/><rect x="3113.03" y="1215.50" width="4.2" height="2.50" fill="#3d7ff0"/><rect x="3120.26" y="961.10" width="4.2" height="256.90" rx="2.00" fill="#3d7ff0"/><rect x="3120.26" y="1215.50" width="4.2" height="2.50" fill="#3d7ff0"/><rect x="3127.49" y="1051.10" width="4.2" height="166.90" rx="2.00" fill="#3d7ff0"/><rect x="3127.49" y="1215.50" width="4.2" height="2.50" fill="#3d7ff0"/><rect x="3134.72" y="1168.70" width="4.2" height="49.30" rx="2.00" fill="#3d7ff0"/><rect x="3134.72" y="1215.50" width="4.2" height="2.50" fill="#3d7ff0"/><rect x="3141.96" y="1116.90" width="4.2" height="101.10" rx="2.00" fill="#3d7ff0"/><rect x="3141.96" y="1215.50" width="4.2" height="2.50" fill="#3d7ff0"/><rect x="3149.19" y="1120.80" width="4.2" height="97.20" rx="2.00" fill="#3d7ff0"/><rect x="3149.19" y="1215.50" width="4.2" height="2.50" fill="#3d7ff0"/><rect x="3156.42" y="1099.60" width="4.2" height="118.40" rx="2.00" fill="#3d7ff0"/><rect x="3156.42" y="1215.50" width="4.2" height="2.50" fill="#3d7ff0"/><rect x="3163.66" y="1144.50" width="4.2" height="73.50" rx="2.00" fill="#3d7ff0"/><rect x="3163.66" y="1215.50" width="4.2" height="2.50" fill="#3d7ff0"/><rect x="3170.89" y="1139.30" width="4.2" height="78.70" rx="2.00" fill="#3d7ff0"/><rect x="3170.89" y="1215.50" width="4.2" height="2.50" fill="#3d7ff0"/><rect x="3178.12" y="1094.70" width="4.2" height="123.30" rx="2.00" fill="#3d7ff0"/><rect x="3178.12" y="1215.50" width="4.2" height="2.50" fill="#3d7ff0"/><rect x="3185.36" y="1033.30" width="4.2" height="184.70" rx="2.00" fill="#3d7ff0"/><rect x="3185.36" y="1215.50" width="4.2" height="2.50" fill="#3d7ff0"/><rect x="3192.59" y="1108.40" width="4.2" height="109.60" rx="2.00" fill="#3d7ff0"/><rect x="3192.59" y="1215.50" width="4.2" height="2.50" fill="#3d7ff0"/><rect x="3199.82" y="1167.60" width="4.2" height="50.40" rx="2.00" fill="#3d7ff0"/><rect x="3199.82" y="1215.50" width="4.2" height="2.50" fill="#3d7ff0"/><rect x="3207.05" y="1132.40" width="4.2" height="85.60" rx="2.00" fill="#3d7ff0"/><rect x="3207.05" y="1215.50" width="4.2" height="2.50" fill="#3d7ff0"/><rect x="3214.29" y="1165.70" width="4.2" height="52.30" rx="2.00" fill="#3d7ff0"/><rect x="3214.29" y="1215.50" width="4.2" height="2.50" fill="#3d7ff0"/><rect x="3221.52" y="1089.10" width="4.2" height="128.90" rx="2.00" fill="#3d7ff0"/><rect x="3221.52" y="1215.50" width="4.2" height="2.50" fill="#3d7ff0"/><rect x="3228.75" y="943.80" width="4.2" height="274.20" rx="2.00" fill="#3d7ff0"/><rect x="3228.75" y="1215.50" width="4.2" height="2.50" fill="#3d7ff0"/><rect x="3235.99" y="974.10" width="4.2" height="243.90" rx="2.00" fill="#3d7ff0"/><rect x="3235.99" y="1215.50" width="4.2" height="2.50" fill="#3d7ff0"/><rect x="3243.22" y="1050.60" width="4.2" height="167.40" rx="2.00" fill="#3d7ff0"/><rect x="3243.22" y="1215.50" width="4.2" height="2.50" fill="#3d7ff0"/><rect x="3250.45" y="1115.30" width="4.2" height="102.70" rx="2.00" fill="#3d7ff0"/><rect x="3250.45" y="1215.50" width="4.2" height="2.50" fill="#3d7ff0"/><rect x="3257.69" y="1140.60" width="4.2" height="77.40" rx="2.00" fill="#3d7ff0"/><rect x="3257.69" y="1215.50" width="4.2" height="2.50" fill="#3d7ff0"/><rect x="3264.92" y="1049.80" width="4.2" height="168.20" rx="2.00" fill="#3d7ff0"/><rect x="3264.92" y="1215.50" width="4.2" height="2.50" fill="#3d7ff0"/><rect x="3272.15" y="1011.20" width="4.2" height="206.80" rx="2.00" fill="#3d7ff0"/><rect x="3272.15" y="1215.50" width="4.2" height="2.50" fill="#3d7ff0"/><rect x="3279.38" y="1009.30" width="4.2" height="208.70" rx="2.00" fill="#3d7ff0"/><rect x="3279.38" y="1215.50" width="4.2" height="2.50" fill="#3d7ff0"/><rect x="3286.62" y="1014.00" width="4.2" height="204.00" rx="2.00" fill="#3d7ff0"/><rect x="3286.62" y="1215.50" width="4.2" height="2.50" fill="#3d7ff0"/><rect x="3293.85" y="1088.60" width="4.2" height="129.40" rx="2.00" fill="#3d7ff0"/><rect x="3293.85" y="1215.50" width="4.2" height="2.50" fill="#3d7ff0"/><rect x="3301.08" y="1055.30" width="4.2" height="162.70" rx="2.00" fill="#3d7ff0"/><rect x="3301.08" y="1215.50" width="4.2" height="2.50" fill="#3d7ff0"/><rect x="3308.32" y="1138.70" width="4.2" height="79.30" rx="2.00" fill="#3d7ff0"/><rect x="3308.32" y="1215.50" width="4.2" height="2.50" fill="#3d7ff0"/><rect x="3315.55" y="1123.00" width="4.2" height="95.00" rx="2.00" fill="#3d7ff0"/><rect x="3315.55" y="1215.50" width="4.2" height="2.50" fill="#3d7ff0"/><rect x="3322.78" y="1160.20" width="4.2" height="57.80" rx="2.00" fill="#3d7ff0"/><rect x="3322.78" y="1215.50" width="4.2" height="2.50" fill="#3d7ff0"/><rect x="3330.02" y="1202.00" width="4.2" height="16.00" rx="2.00" fill="#3d7ff0"/><rect x="3330.02" y="1215.50" width="4.2" height="2.50" fill="#3d7ff0"/><rect x="3337.25" y="1188.30" width="4.2" height="29.70" rx="2.00" fill="#3d7ff0"/><rect x="3337.25" y="1215.50" width="4.2" height="2.50" fill="#3d7ff0"/><rect x="3344.48" y="1159.60" width="4.2" height="58.40" rx="2.00" fill="#3d7ff0"/><rect x="3344.48" y="1215.50" width="4.2" height="2.50" fill="#3d7ff0"/><rect x="3351.71" y="1205.30" width="4.2" height="12.70" rx="2.00" fill="#3d7ff0"/><rect x="3351.71" y="1215.50" width="4.2" height="2.50" fill="#3d7ff0"/><rect x="3358.95" y="1186.90" width="4.2" height="31.10" rx="2.00" fill="#3d7ff0"/><rect x="3358.95" y="1215.50" width="4.2" height="2.50" fill="#3d7ff0"/><rect x="3366.18" y="1155.80" width="4.2" height="62.20" rx="2.00" fill="#3d7ff0"/><rect x="3366.18" y="1215.50" width="4.2" height="2.50" fill="#3d7ff0"/><rect x="3373.41" y="1204.20" width="4.2" height="13.80" rx="2.00" fill="#3d7ff0"/><rect x="3373.41" y="1215.50" width="4.2" height="2.50" fill="#3d7ff0"/><rect x="3380.65" y="1150.30" width="4.2" height="67.70" rx="2.00" fill="#3d7ff0"/><rect x="3380.65" y="1215.50" width="4.2" height="2.50" fill="#3d7ff0"/><rect x="3387.88" y="1031.30" width="4.2" height="186.70" rx="2.00" fill="#3d7ff0"/><rect x="3387.88" y="1215.50" width="4.2" height="2.50" fill="#3d7ff0"/><rect x="3395.11" y="1111.20" width="4.2" height="106.80" rx="2.00" fill="#3d7ff0"/><rect x="3395.11" y="1215.50" width="4.2" height="2.50" fill="#3d7ff0"/><rect x="3402.35" y="1093.30" width="4.2" height="124.70" rx="2.00" fill="#3d7ff0"/><rect x="3402.35" y="1215.50" width="4.2" height="2.50" fill="#3d7ff0"/><rect x="3409.58" y="1104.80" width="4.2" height="113.20" rx="2.00" fill="#3d7ff0"/><rect x="3409.58" y="1215.50" width="4.2" height="2.50" fill="#3d7ff0"/><rect x="3416.81" y="1128.20" width="4.2" height="89.80" rx="2.00" fill="#3d7ff0"/><rect x="3416.81" y="1215.50" width="4.2" height="2.50" fill="#3d7ff0"/><rect x="3424.04" y="1073.20" width="4.2" height="144.80" rx="2.00" fill="#3d7ff0"/><rect x="3424.04" y="1215.50" width="4.2" height="2.50" fill="#3d7ff0"/><rect x="3431.28" y="1091.40" width="4.2" height="126.60" rx="2.00" fill="#3d7ff0"/><rect x="3431.28" y="1215.50" width="4.2" height="2.50" fill="#3d7ff0"/><rect x="3438.51" y="1151.60" width="4.2" height="66.40" rx="2.00" fill="#3d7ff0"/><rect x="3438.51" y="1215.50" width="4.2" height="2.50" fill="#3d7ff0"/><rect x="3445.74" y="1128.20" width="4.2" height="89.80" rx="2.00" fill="#3d7ff0"/><rect x="3445.74" y="1215.50" width="4.2" height="2.50" fill="#3d7ff0"/></svg>
<div class="t " style="left:2213px;top:1207.72px;font-size:21px;color:#a1a1a1;font-weight:400;letter-spacing:0.4px;transform:translateX(-100%);">$0.00</div>
<div class="t " style="left:2213px;top:1112.72px;font-size:21px;color:#a1a1a1;font-weight:400;letter-spacing:0.4px;transform:translateX(-100%);">$15.00</div>
<div class="t " style="left:2213px;top:1017.72px;font-size:21px;color:#a1a1a1;font-weight:400;letter-spacing:0.4px;transform:translateX(-100%);">$30.00</div>
<div class="t " style="left:2213px;top:922.72px;font-size:21px;color:#a1a1a1;font-weight:400;letter-spacing:0.4px;transform:translateX(-100%);">$45.00</div>
<div class="t " style="left:2213px;top:827.72px;font-size:21px;color:#a1a1a1;font-weight:400;letter-spacing:0.4px;transform:translateX(-100%);">$60.00</div>
<div class="t" style="left:2229.20px;top:1234.00px;font-size:21px;color:#a1a1a1;letter-spacing:-0.35px;transform-origin:100% 0;transform:translateX(-100%) rotate(-45deg);">Jan 1, 11:00</div>
<div class="t" style="left:2287.06px;top:1234.00px;font-size:21px;color:#a1a1a1;letter-spacing:-0.35px;transform-origin:100% 0;transform:translateX(-100%) rotate(-45deg);">Jan 1, 19:00</div>
<div class="t" style="left:2344.93px;top:1234.00px;font-size:21px;color:#a1a1a1;letter-spacing:-0.35px;transform-origin:100% 0;transform:translateX(-100%) rotate(-45deg);">Jan 2, 03:00</div>
<div class="t" style="left:2402.79px;top:1234.00px;font-size:21px;color:#a1a1a1;letter-spacing:-0.35px;transform-origin:100% 0;transform:translateX(-100%) rotate(-45deg);">Jan 2, 11:00</div>
<div class="t" style="left:2460.66px;top:1234.00px;font-size:21px;color:#a1a1a1;letter-spacing:-0.35px;transform-origin:100% 0;transform:translateX(-100%) rotate(-45deg);">Jan 2, 19:00</div>
<div class="t" style="left:2518.52px;top:1234.00px;font-size:21px;color:#a1a1a1;letter-spacing:-0.35px;transform-origin:100% 0;transform:translateX(-100%) rotate(-45deg);">Jan 3, 03:00</div>
<div class="t" style="left:2576.38px;top:1234.00px;font-size:21px;color:#a1a1a1;letter-spacing:-0.35px;transform-origin:100% 0;transform:translateX(-100%) rotate(-45deg);">Jan 3, 11:00</div>
<div class="t" style="left:2634.25px;top:1234.00px;font-size:21px;color:#a1a1a1;letter-spacing:-0.35px;transform-origin:100% 0;transform:translateX(-100%) rotate(-45deg);">Jan 3, 19:00</div>
<div class="t" style="left:2692.11px;top:1234.00px;font-size:21px;color:#a1a1a1;letter-spacing:-0.35px;transform-origin:100% 0;transform:translateX(-100%) rotate(-45deg);">Jan 4, 03:00</div>
<div class="t" style="left:2749.98px;top:1234.00px;font-size:21px;color:#a1a1a1;letter-spacing:-0.35px;transform-origin:100% 0;transform:translateX(-100%) rotate(-45deg);">Jan 4, 11:00</div>
<div class="t" style="left:2807.84px;top:1234.00px;font-size:21px;color:#a1a1a1;letter-spacing:-0.35px;transform-origin:100% 0;transform:translateX(-100%) rotate(-45deg);">Jan 4, 19:00</div>
<div class="t" style="left:2865.70px;top:1234.00px;font-size:21px;color:#a1a1a1;letter-spacing:-0.35px;transform-origin:100% 0;transform:translateX(-100%) rotate(-45deg);">Jan 5, 03:00</div>
<div class="t" style="left:2923.57px;top:1234.00px;font-size:21px;color:#a1a1a1;letter-spacing:-0.35px;transform-origin:100% 0;transform:translateX(-100%) rotate(-45deg);">Jan 5, 11:00</div>
<div class="t" style="left:2981.43px;top:1234.00px;font-size:21px;color:#a1a1a1;letter-spacing:-0.35px;transform-origin:100% 0;transform:translateX(-100%) rotate(-45deg);">Jan 5, 19:00</div>
<div class="t" style="left:3039.30px;top:1234.00px;font-size:21px;color:#a1a1a1;letter-spacing:-0.35px;transform-origin:100% 0;transform:translateX(-100%) rotate(-45deg);">Jan 6, 03:00</div>
<div class="t" style="left:3097.16px;top:1234.00px;font-size:21px;color:#a1a1a1;letter-spacing:-0.35px;transform-origin:100% 0;transform:translateX(-100%) rotate(-45deg);">Jan 6, 11:00</div>
<div class="t" style="left:3155.02px;top:1234.00px;font-size:21px;color:#a1a1a1;letter-spacing:-0.35px;transform-origin:100% 0;transform:translateX(-100%) rotate(-45deg);">Jan 6, 19:00</div>
<div class="t" style="left:3212.89px;top:1234.00px;font-size:21px;color:#a1a1a1;letter-spacing:-0.35px;transform-origin:100% 0;transform:translateX(-100%) rotate(-45deg);">Jan 7, 03:00</div>
<div class="t" style="left:3270.75px;top:1234.00px;font-size:21px;color:#a1a1a1;letter-spacing:-0.35px;transform-origin:100% 0;transform:translateX(-100%) rotate(-45deg);">Jan 7, 11:00</div>
<div class="t" style="left:3328.62px;top:1234.00px;font-size:21px;color:#a1a1a1;letter-spacing:-0.35px;transform-origin:100% 0;transform:translateX(-100%) rotate(-45deg);">Jan 7, 19:00</div>
<div class="t" style="left:3386.48px;top:1234.00px;font-size:21px;color:#a1a1a1;letter-spacing:-0.35px;transform-origin:100% 0;transform:translateX(-100%) rotate(-45deg);">Jan 8, 03:00</div>
<div class="t" style="left:3444.34px;top:1234.00px;font-size:21px;color:#a1a1a1;letter-spacing:-0.35px;transform-origin:100% 0;transform:translateX(-100%) rotate(-45deg);">Jan 8, 11:00</div>
<div style="position:absolute;left:550px;top:1516px;width:1462px;height:700px;background:#19191a;border:2px solid #2e2e31;border-radius:24px;box-sizing:border-box;"></div>
<div class="t " style="left:601px;top:1567.91px;font-size:32px;color:#f5f5f5;font-weight:700;letter-spacing:-0.22px;">Cost by Model</div>
<div class="t " style="left:601px;top:1620.45px;font-size:29px;color:#a1a1a1;font-weight:400;letter-spacing:0px;">Top models by spend</div>
<div style="position:absolute;left:2060px;top:1516px;width:1462px;height:700px;background:#19191a;border:2px solid #2e2e31;border-radius:24px;box-sizing:border-box;"></div>
<div class="t " style="left:2111px;top:1567.91px;font-size:32px;color:#f5f5f5;font-weight:700;letter-spacing:-0.22px;">Token Usage by Model</div>
<div class="t " style="left:2111px;top:1620.45px;font-size:29px;color:#a1a1a1;font-weight:400;letter-spacing:0px;">Input, output, and cached tokens per model</div>
<div style="position:absolute;left:600px;top:1690px;width:240px;height:290px;overflow:hidden;">
<div class="t" style="right:16.799999999999955px;top:41.38px;font-size:24px;color:#a1a1a1;">gpt-5.1</div>
<div class="t" style="right:16.799999999999955px;top:106.38px;font-size:24px;color:#a1a1a1;">gemini-3-flash-preview</div>
<div class="t" style="right:16.799999999999955px;top:171.38px;font-size:24px;color:#a1a1a1;">gpt-5-nano</div>
<div class="t" style="right:16.799999999999955px;top:236.38px;font-size:24px;color:#a1a1a1;">gpt-5.2</div>
<div class="t" style="right:16.799999999999955px;top:301.38px;font-size:24px;color:#a1a1a1;">claude-sonnet-4.5</div>
</div>
<div style="position:absolute;left:840px;top:1718.4px;width:9px;height:52px;background:#2f7df6;border-radius:0 8px 8px 0;"></div>
<div style="position:absolute;left:840px;top:1783.4px;width:10px;height:52px;background:#2f7df6;border-radius:0 8px 8px 0;"></div>
<div style="position:absolute;left:840px;top:1848.4px;width:58px;height:52px;background:#2f7df6;border-radius:0 8px 8px 0;"></div>
<div style="position:absolute;left:840px;top:1913.4px;width:124px;height:52px;background:#2f7df6;border-radius:0 8px 8px 0;"></div>
<div style="position:absolute;left:840px;top:1978.4px;width:272px;height:52px;background:#2f7df6;border-radius:0 8px 8px 0;"></div>
<div style="position:absolute;left:2110px;top:1690px;width:240px;height:290px;overflow:hidden;">
<div class="t" style="right:17.20px;top:44.68px;font-size:24px;color:#a1a1a1;">gpt-5.2</div>
<div class="t" style="right:17.20px;top:115.18px;font-size:24px;color:#a1a1a1;">0B-A3B-Instruct-FP8</div>
<div class="t" style="right:17.20px;top:185.68px;font-size:24px;color:#a1a1a1;">claude-opus-4.5</div>
<div class="t" style="right:17.20px;top:256.18px;font-size:24px;color:#a1a1a1;">claude-sonnet-4.5</div>
</div>
<div style="position:absolute;left:2350px;top:1718.9px;width:24.8px;height:56.5px;background:#90c5fd;"></div>
<div style="position:absolute;left:2374.8px;top:1718.9px;width:2.5px;height:56.5px;background:#2d5fd8;"></div>
<div style="position:absolute;left:2350px;top:1789.4px;width:30.9px;height:56.5px;background:#90c5fd;"></div>
<div style="position:absolute;left:2380.9px;top:1789.4px;width:2.5px;height:56.5px;background:#2d5fd8;"></div>
<div style="position:absolute;left:2350px;top:1859.9px;width:58.2px;height:56.5px;background:#90c5fd;"></div>
<div style="position:absolute;left:2408.2px;top:1859.9px;width:2.5px;height:56.5px;background:#2d5fd8;"></div>
<div style="position:absolute;left:2350px;top:1930.4px;width:100.1px;height:56.5px;background:#90c5fd;"></div>
<div style="position:absolute;left:2450.1px;top:1930.4px;width:2.5px;height:56.5px;background:#2d5fd8;"></div>
</body></html>
